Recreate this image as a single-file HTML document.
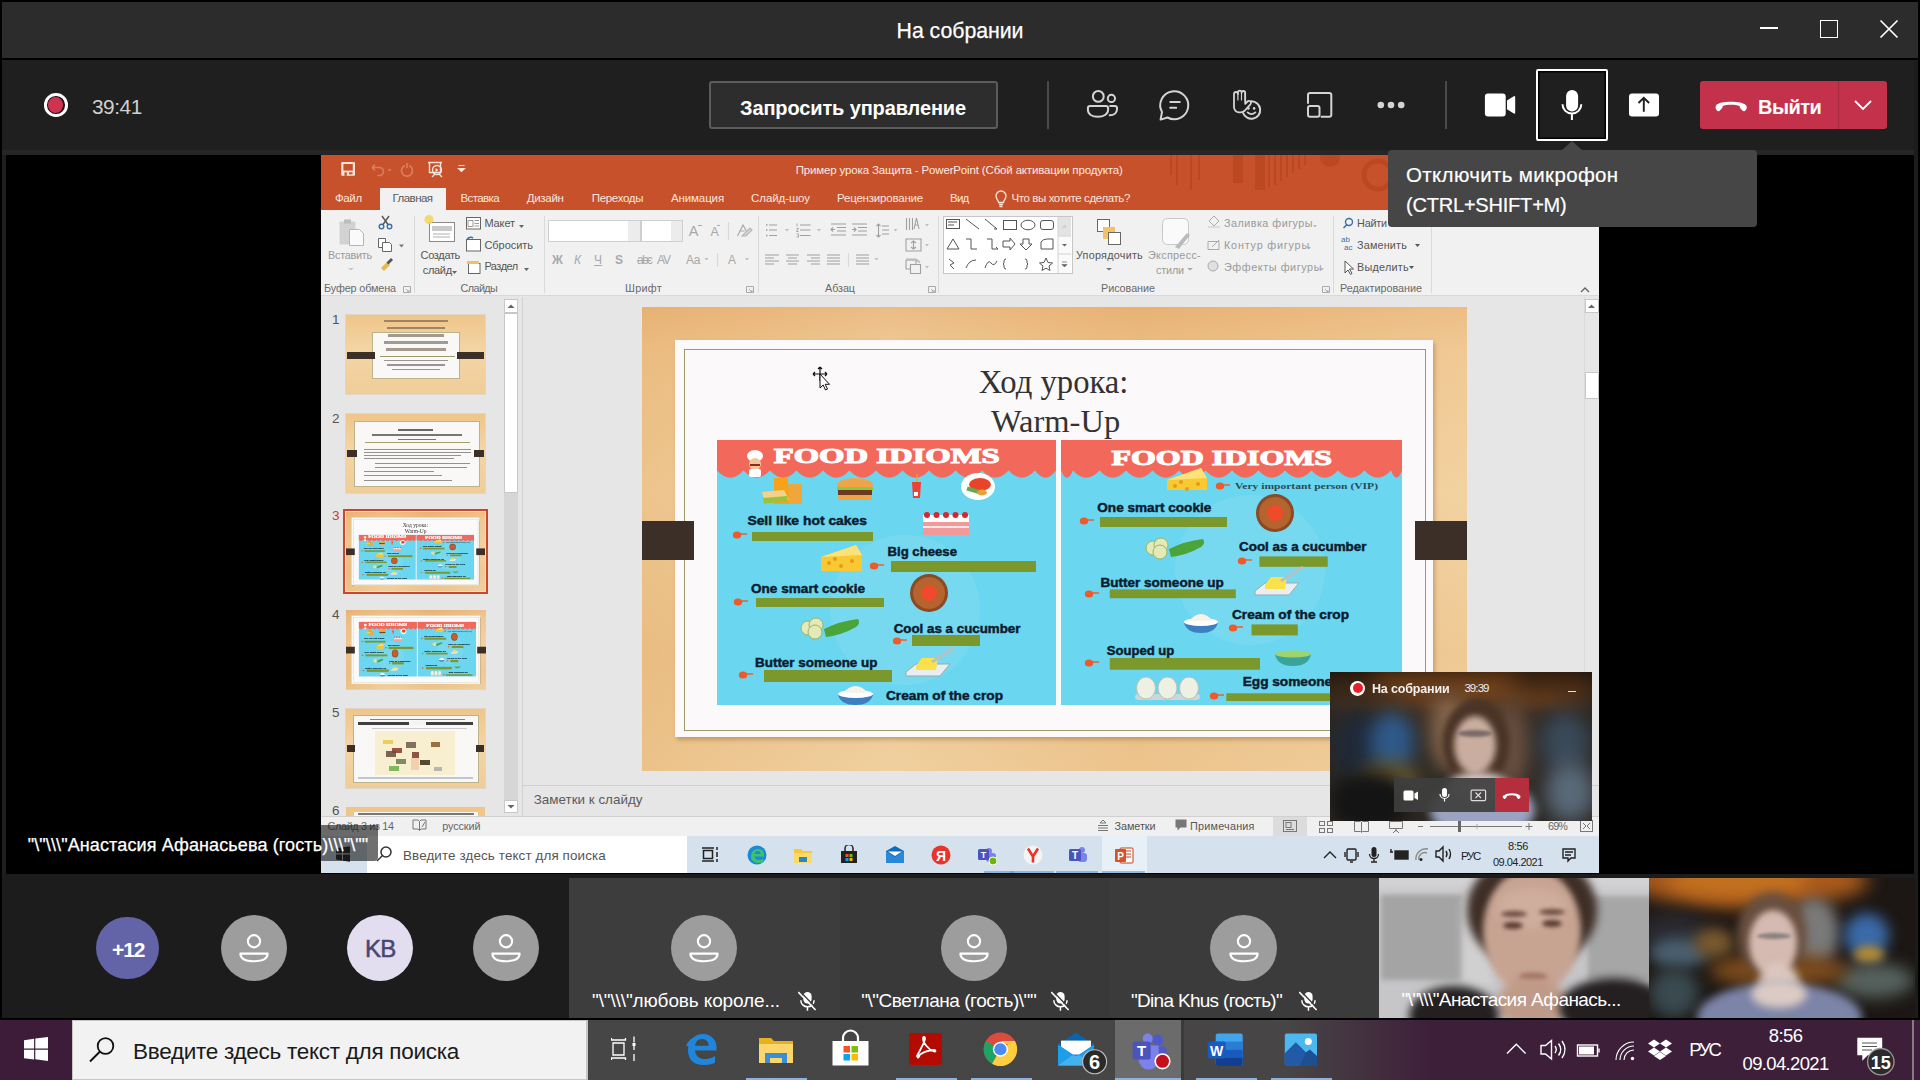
<!DOCTYPE html>
<html><head><meta charset="utf-8">
<style>
*{margin:0;padding:0;box-sizing:border-box}
html,body{width:1920px;height:1080px;overflow:hidden;background:#000;font-family:"Liberation Sans",sans-serif}
.a{position:absolute}
.t{position:absolute;white-space:nowrap;line-height:1}
</style></head><body>
<!-- Teams title bar -->
<div class="a" style="left:2px;top:2px;width:1916px;height:56px;background:#2c2c2c"></div>
<div class="t" style="left:0;width:1920px;text-align:center;top:21px;font-size:21.3px;letter-spacing:-0.05px;color:#fff;-webkit-text-stroke:0.25px #fff">На собрании</div>
<!-- window controls -->
<div class="a" style="left:1760px;top:27.2px;width:18px;height:1.6px;background:#fff"></div>
<div class="a" style="left:1820px;top:20px;width:18px;height:18px;border:1.6px solid #fff"></div>
<svg class="a" style="left:1879px;top:19px" width="20" height="20" viewBox="0 0 20 20"><path d="M1.5 1.5L18.5 18.5M18.5 1.5L1.5 18.5" stroke="#fff" stroke-width="1.7"/></svg>
<!-- toolbar -->
<div class="a" style="left:2px;top:60px;width:1912px;height:95px;background:#1f1f1f"></div>
<div class="a" style="left:2px;top:150px;width:1912px;height:5px;background:#262626"></div>
<div class="a" style="left:1914px;top:60px;width:4px;height:1020px;background:#1c1c1c"></div>
<div class="a" style="left:2px;top:155px;width:4px;height:720px;background:#1f1f1f"></div>
<!-- record dot -->
<div class="a" style="left:43.85px;top:93.15px;width:23.7px;height:23.7px;border-radius:50%;border:3px solid #fff;background:#1a0c10"></div>
<div class="a" style="left:48.1px;top:97.4px;width:15.2px;height:15.2px;border-radius:50%;background:#cf3350"></div>
<div class="t" style="left:92px;top:96.5px;font-size:20.8px;letter-spacing:-0.45px;color:#d0d0d0">39:41</div>
<!-- request control -->
<div class="a" style="left:709px;top:81px;width:289px;height:48px;border:2px solid #5c5c5c;border-radius:3px;background:#2d2d2d"></div>
<div class="t" style="left:740px;top:98px;font-size:20px;letter-spacing:-0.13px;font-weight:bold;color:#fff">Запросить управление</div>
<div class="a" style="left:1047px;top:81px;width:2px;height:48px;background:#4a4a4a"></div>
<div class="a" style="left:1445px;top:81px;width:2px;height:48px;background:#4a4a4a"></div>
<!-- mic focus -->
<div class="a" style="left:1536px;top:69px;width:72px;height:72px;border:2px solid #fff;border-radius:2px;background:#1f1f1f;box-shadow:inset 0 0 0 1.5px #000"></div>
<!-- leave button -->
<div class="a" style="left:1700px;top:81px;width:187px;height:48px;border-radius:3px;background:#c4314b"></div>
<div class="a" style="left:1838px;top:81px;width:1px;height:48px;background:#a82a40"></div>
<div class="t" style="left:1758px;top:97px;font-size:20px;letter-spacing:-0.5px;font-weight:bold;color:#fff">Выйти</div>

<svg class="a" style="left:0;top:0" width="1920" height="160" viewBox="0 0 1920 160">
<g fill="none" stroke="#d4d4d4" stroke-width="2" stroke-linecap="round">
<circle cx="1098.3" cy="96.4" r="5.4"/>
<circle cx="1111.4" cy="98.4" r="3.6"/>
<path d="M1091 106h14.8a2.3 2.3 0 0 1 2.3 2.3v1.5c0 4.5-4.6 7-10.2 7s-10-2.5-10-7v-1.5a2.3 2.3 0 0 1 2.3-2.3z" stroke-linecap="butt"/>
<path d="M1110.2 106h4.5a2.3 2.3 0 0 1 2.3 2.3v1c0 3.7-3.3 6-7.3 6"/>
<path d="M1162 112A14 14 0 1 1 1167.5 117.5L1160.6 119.6z" stroke-linejoin="round"/>
<path d="M1170.3 102h9.5M1170.2 107.8h6"/>
<path d="M1234 104.5v-10.5a2 2 0 0 1 4 0v-1.5a1.8 1.8 0 0 1 3.6 0v0.3a1.8 1.8 0 0 1 3.6 0v11l2.3-2.3a2 2 0 0 1 2.9 2.8l-5.5 6.2c-1.3 1.3-2.6 1.8-4.5 1.8h-1.4c-2.7 0-5-2.3-5-5z" stroke-width="1.8" stroke-linejoin="round"/>
<path d="M1237.9 94v6M1241.5 92.5v7.5M1245.1 92.7v7.3" stroke-width="1.2"/>
<path d="M1251.4 101.2A8.8 8.8 0 1 1 1243.1 113" stroke-width="2"/>
<path d="M1247.6 112.4q3.9 3.4 7.8 0" stroke-width="1.8"/>
<path d="M1308 103v-8a2 2 0 0 1 2-2h19.3a2 2 0 0 1 2 2v19.8a2 2 0 0 1-2 2h-7.8"/>
<rect x="1308" y="106" width="11.5" height="10.8" rx="2"/>
</g>
<g fill="#d4d4d4"><circle cx="1248.4" cy="108.4" r="1.3"/><circle cx="1254.1" cy="108.4" r="1.3"/>
<circle cx="1380.8" cy="105" r="3.3"/><circle cx="1391" cy="105" r="3.3"/><circle cx="1401.2" cy="105" r="3.3"/></g>
<g fill="#fff">
<rect x="1484.9" y="93.5" width="20.8" height="23" rx="3"/>
<path d="M1507 100.5l6.8-4.3a1 1 0 0 1 1.4 0.8v15.8a1 1 0 0 1-1.4 0.8l-6.8-4.3z"/>
<rect x="1566.1" y="89.9" width="12" height="21.5" rx="6"/>
<rect x="1629" y="93.5" width="30" height="23" rx="3"/>
</g>
<path d="M1562.5 104.2a9.4 9.4 0 0 0 18.8 0M1571.9 114v6" fill="none" stroke="#fff" stroke-width="2"/>
<path d="M1643.8 111.8v-13.5M1638.5 103l5.3-5.2 5.3 5.2" fill="none" stroke="#1f1f1f" stroke-width="1.9"/>
<path d="M1716 105.2c4.5-4.5 25.5-4.5 30 0c1 1 1 3.5 0 4.5l-1.2 1.2c-.6.6-1.6.5-2.2-.1l-2.5-2.8c-.5-.5-.6-1.4-.3-2c-4.8-1.8-12.5-1.8-17.3 0c.3.6.2 1.5-.3 2l-2.5 2.8c-.6.6-1.6.7-2.2.1l-1.2-1.2c-1-1-1-3.5 0-4.5z" fill="#fff"/>
<path d="M1855 101l8 8 8-8" fill="none" stroke="#fff" stroke-width="1.8"/>
<path d="M1562 150l10-9 10 9z" fill="#474747"/>
</svg>
<div class="a" style="left:321px;top:155px;width:1278px;height:55px;background:#c6512b;"></div>
<svg class="a" style="left:1160px;top:155px" width="230" height="55" viewBox="0 0 230 55"><g fill="#b9461f" opacity="0.75"><rect x="10" y="0" width="2" height="20"/><rect x="16" y="0" width="2" height="30"/><rect x="30" y="0" width="2" height="35"/><rect x="38" y="0" width="2" height="25"/><rect x="73" y="0" width="10" height="28"/><rect x="95" y="0" width="10" height="35"/><rect x="108" y="0" width="2" height="32"/><rect x="114" y="0" width="2" height="30"/><rect x="120" y="0" width="2" height="26"/><rect x="126" y="0" width="2" height="22"/><rect x="132" y="0" width="2" height="18"/><rect x="138" y="0" width="2" height="14"/><rect x="144" y="0" width="2" height="10"/><circle cx="170" cy="2" r="10"/><circle cx="218" cy="20" r="14" fill="none" stroke="#b9461f" stroke-width="5"/></g></svg>
<svg class="a" style="left:321px;top:155px" width="160" height="30" viewBox="0 0 160 30">
<rect x="20.2" y="7" width="13.8" height="13.8" rx="1" fill="#f7e3da"/><rect x="22.4" y="9" width="9.4" height="6.6" fill="#c6512b"/><rect x="23.5" y="17.3" width="2.3" height="3.5" fill="#c6512b"/><rect x="28" y="17.3" width="3.5" height="2" fill="#c6512b"/>
<g fill="none" stroke="#e08a6a" stroke-width="1.6" opacity="0.8">
<path d="M51 12.5h7.5a4 4 0 0 1 0 8h-2M51 12.5l3-3M51 12.5l3 3"/>
<path d="M67 15h3"/>
<path d="M84 10.5a5.5 5.5 0 1 0 4 0M86 8v5"/>
</g>
<g fill="none" stroke="#f7e3da" stroke-width="1.4">
<path d="M107 7.5h14M108.5 7.5v10h11v-10"/><circle cx="116" cy="15" r="4.5"/><path d="M111 22l3-3M121 22l-3-3"/>
</g>
<path d="M114.5 13l3 2-3 2z" fill="#f7e3da"/>
<path d="M137.5 10.5h6M137.5 13.5l3 3 3-3z" stroke="#f7e3da" stroke-width="1.2" fill="#f7e3da"/>
</svg>
<div class="t" style="left:795.70px;top:165.27px;font-size:11.5px;color:#fbeae3;letter-spacing:-0.155px;">Пример урока Защита - PowerPoint (Сбой активации продукта)</div>
<div class="a" style="left:380px;top:188px;width:66px;height:22px;background:#f1f1f1;"></div>
<div class="t" style="left:335.00px;top:193.37px;font-size:11.5px;color:#fbe6dc;letter-spacing:-0.393px;">Файл</div>
<div class="t" style="left:392.50px;top:193.37px;font-size:11.5px;color:#5a5a5a;letter-spacing:-0.539px;">Главная</div>
<div class="t" style="left:460.50px;top:193.37px;font-size:11.5px;color:#fbe6dc;letter-spacing:-0.606px;">Вставка</div>
<div class="t" style="left:526.70px;top:193.37px;font-size:11.5px;color:#fbe6dc;letter-spacing:-0.276px;">Дизайн</div>
<div class="t" style="left:591.70px;top:193.37px;font-size:11.5px;color:#fbe6dc;letter-spacing:-0.305px;">Переходы</div>
<div class="t" style="left:671.00px;top:193.37px;font-size:11.5px;color:#fbe6dc;letter-spacing:-0.123px;">Анимация</div>
<div class="t" style="left:751.00px;top:193.37px;font-size:11.5px;color:#fbe6dc;letter-spacing:-0.069px;">Слайд-шоу</div>
<div class="t" style="left:837.00px;top:193.37px;font-size:11.5px;color:#fbe6dc;letter-spacing:-0.200px;">Рецензирование</div>
<div class="t" style="left:950.00px;top:193.37px;font-size:11.5px;color:#fbe6dc;letter-spacing:-0.768px;">Вид</div>
<div class="t" style="left:1011.40px;top:193.37px;font-size:11.5px;color:#fbe6dc;letter-spacing:-0.388px;">Что вы хотите сделать?</div>
<svg class="a" style="left:994px;top:190px" width="14" height="18" viewBox="0 0 14 18"><path d="M4.5 12.5c0-2-2.5-3.5-2.5-6.5a5 5 0 0 1 10 0c0 3-2.5 4.5-2.5 6.5zM5 14.5h4M5.5 16.5h3" fill="none" stroke="#fbe6dc" stroke-width="1.3"/></svg>
<div class="a" style="left:321px;top:210px;width:1278px;height:86px;background:#f1f1f1;"></div>
<div class="a" style="left:321px;top:295px;width:1278px;height:1px;background:#d9d9d9;"></div>
<div class="a" style="left:414px;top:216px;width:1px;height:77px;background:#dadada;"></div>
<div class="a" style="left:544px;top:216px;width:1px;height:77px;background:#dadada;"></div>
<div class="a" style="left:757.5px;top:216px;width:1px;height:77px;background:#dadada;"></div>
<div class="a" style="left:937.5px;top:216px;width:1px;height:77px;background:#dadada;"></div>
<div class="a" style="left:1333px;top:216px;width:1px;height:77px;background:#dadada;"></div>
<div class="a" style="left:1431px;top:216px;width:1px;height:77px;background:#dadada;"></div>
<div class="t" style="left:324.00px;top:283.16px;font-size:10.8px;color:#6a6a6a;letter-spacing:-0.116px;">Буфер обмена</div>
<div class="t" style="left:460.60px;top:283.16px;font-size:10.8px;color:#6a6a6a;letter-spacing:-0.601px;">Слайды</div>
<div class="t" style="left:625.00px;top:283.16px;font-size:10.8px;color:#6a6a6a;letter-spacing:0.293px;">Шрифт</div>
<div class="t" style="left:825.00px;top:283.16px;font-size:10.8px;color:#6a6a6a;letter-spacing:-0.059px;">Абзац</div>
<div class="t" style="left:1101.00px;top:283.16px;font-size:10.8px;color:#6a6a6a;letter-spacing:-0.044px;">Рисование</div>
<div class="t" style="left:1340.00px;top:283.16px;font-size:10.8px;color:#6a6a6a;letter-spacing:-0.020px;">Редактирование</div>
<svg class="a" style="left:403px;top:286px" width="8" height="7" viewBox="0 0 8 7"><path d="M0.5 0.5h7v6h-7zM3 3l3 3M6 4v2h-2" fill="none" stroke="#aaa" stroke-width="1"/></svg>
<svg class="a" style="left:746px;top:286px" width="8" height="7" viewBox="0 0 8 7"><path d="M0.5 0.5h7v6h-7zM3 3l3 3M6 4v2h-2" fill="none" stroke="#aaa" stroke-width="1"/></svg>
<svg class="a" style="left:928px;top:286px" width="8" height="7" viewBox="0 0 8 7"><path d="M0.5 0.5h7v6h-7zM3 3l3 3M6 4v2h-2" fill="none" stroke="#aaa" stroke-width="1"/></svg>
<svg class="a" style="left:1322px;top:286px" width="8" height="7" viewBox="0 0 8 7"><path d="M0.5 0.5h7v6h-7zM3 3l3 3M6 4v2h-2" fill="none" stroke="#aaa" stroke-width="1"/></svg>
<svg class="a" style="left:321px;top:210px" width="1278" height="86" viewBox="321 210 1278 86">
<g>
<rect x="339" y="10" width="0" height="0"/>
<path d="M339.5 221.5h16v23h-16z" fill="#d2d2d2"/><path d="M344 219.5h7v4h-7z" fill="#bdbdbd"/>
<path d="M349.5 229.5h10l4 4v12h-14z" fill="#fafafa" stroke="#b5b5b5" stroke-width="1"/>
<path d="M348 268l3 2.5 3-2.5" fill="#c9c9c9"/>
<g fill="none" stroke="#3d6fa8" stroke-width="1.4"><circle cx="381.5" cy="226.5" r="2.3"/><circle cx="389.5" cy="226.5" r="2.3"/><path d="M383 224.5l6-8.5M388 224.5l-6-8.5" stroke="#555"/></g>
<g fill="#fff" stroke="#666" stroke-width="1"><path d="M378.5 238.5h7v9h-7z"/><path d="M382.5 242.5h7l2 2v7h-9z"/></g>
<path d="M399 244.5h5l-2.5 3z" fill="#777"/>
<path d="M381 268l6-6 3 3-6 6z" fill="#e9b84a"/><path d="M386.5 262.5l4.5-4.5 2 2-4.5 4.5z" fill="#555"/>
<!-- new slide -->
<rect x="429.5" y="222.5" width="25" height="19" fill="#fff" stroke="#8a8a8a" stroke-width="1"/>
<rect x="432" y="226" width="20" height="5" fill="#c9c9c9"/>
<path d="M433 234h17M433 237h17" stroke="#b0b0b0" stroke-width="1"/>
<circle cx="429" cy="219.5" r="4.5" fill="#f3d35a" opacity="0.85"/>
<!-- layout icons -->
<g fill="#fff" stroke="#666" stroke-width="1">
<rect x="466.5" y="217.5" width="14" height="11.5"/><rect x="466.5" y="239.5" width="14" height="11.5"/><rect x="468.5" y="263.5" width="11.5" height="10"/>
</g>
<path d="M468 220.5h5v6h-5zM474.5 220.5h4.5M474.5 223.5h4.5M474.5 226h4.5" stroke="#999" fill="none" stroke-width="1"/>
<path d="M467 240a4 4 0 0 1 6-2" stroke="#3d6fa8" fill="none" stroke-width="1.6"/>
<path d="M467 261h12v3h-12z" fill="#e9c26a"/>
<path d="M519 225h5l-2.5 3z M524 268h5l-2.5 3z M452 271h5l-2.5 3z" fill="#666"/>
<!-- font boxes -->
<rect x="548.5" y="220.5" width="92" height="21" fill="#fff" stroke="#cfcfcf"/>
<rect x="628" y="221" width="12" height="20" fill="#ececec"/>
<rect x="641.5" y="220.5" width="41" height="21" fill="#fff" stroke="#cfcfcf"/>
<rect x="671" y="221" width="11" height="20" fill="#ececec"/>
<!-- shapes gallery -->
<rect x="943.5" y="216.5" width="129" height="57" fill="#fff" stroke="#c6c6c6"/>
<rect x="1058" y="217" width="13" height="19" fill="#e3e3e3"/>
<rect x="1058" y="236" width="13" height="37" fill="#fafafa"/>
<path d="M1058 217v56M1058 236h13M1058 254h13" stroke="#d4d4d4" stroke-width="1"/>
<path d="M1062 244l2.5 2.5 2.5-2.5z" fill="#666"/><path d="M1062 262h5M1062 264.5l2.5 2.5 2.5-2.5z" fill="#666" stroke="#666" stroke-width="0.7"/>
<path d="M1062 227.5l2.5-2.5 2.5 2.5z" fill="#c8c8c8"/>
<g fill="none" stroke="#555" stroke-width="1">
<rect x="946.5" y="219.5" width="13" height="9"/><path d="M948 222h9M948 225h6"/>
<path d="M966 219l13 10M985 219l12 10M995 227l2 2-3 0"/>
<rect x="1003.5" y="220.5" width="13" height="9"/>
<ellipse cx="1028" cy="225" rx="7" ry="4.8"/>
<rect x="1040.5" y="220.5" width="13" height="9" rx="2.5"/>
<path d="M947 249l6-10 6 10z"/>
<path d="M966 239h5v10h6M987 239h5v10h6l-2-2"/>
<path d="M1003 241h7v-3l5 6-5 6v-3h-7z"/>
<path d="M1023 239h6v5h3l-6 6-6-6h3z"/>
<path d="M1041 249v-7q2-3 6-3h6v10z"/>
<path d="M949 259l5 4-4 2 4 4M966 268q3-8 10-8M985 268q3-9 6-5t6-2"/>
<path d="M1006 259q-2 0-2 2v2l-1 1 1 1v2q0 2 2 2M1025 259q2 0 2 2v2l1 1-1 1v2q0 2-2 2"/>
<path d="M1046 258l2 4.5 4.5 0.5-3.5 3 1 4.5-4-2.3-4 2.3 1-4.5-3.5-3 4.5-.5z"/>
</g>
<!-- arrange -->
<rect x="1097.5" y="219.5" width="12" height="12" fill="#fff" stroke="#666"/>
<rect x="1103" y="227" width="12" height="12" fill="#f2c26b"/>
<rect x="1108.5" y="232.5" width="12" height="12" fill="#fff" stroke="#666"/>
<path d="M1106 268l3 2.5 3-2.5z" fill="#777"/>
<!-- quick styles -->
<rect x="1162.5" y="218.5" width="26" height="26" rx="5" fill="#fafafa" stroke="#c8c8c8"/>
<path d="M1175 247l12-14 3 2-11 14z" fill="#bbb"/>
<path d="M1187 268l3 2.5 3-2.5z" fill="#aaa"/>
<!-- fill/outline/effects icons -->
<path d="M1209 221l5-5 5 5-5 5z" fill="none" stroke="#aaa"/><path d="M1208 226h12v2h-12z" fill="#ddd"/>
<path d="M1208 241.5h11v8h-11zM1212 247l7-7" fill="none" stroke="#aaa"/>
<circle cx="1213" cy="266" r="5" fill="#e0e0e0" stroke="#aaa"/>
<path d="M1313 225h4l-2 2.5zM1307 247h4l-2 2.5zM1320 268h4l-2 2.5z" fill="#bbb"/>
<!-- editing -->
<circle cx="1349" cy="222" r="3.5" fill="none" stroke="#3d6fa8" stroke-width="1.4"/><path d="M1347 224.5l-3.5 3.5" stroke="#3d6fa8" stroke-width="1.6"/>
<path d="M1415 244h5l-2.5 3zM1409 266h5l-2.5 3z" fill="#555"/>
<path d="M1345 261v12l3-3 2.5 4.5 1.5-1-2.5-4.5h4z" fill="#fff" stroke="#555"/>
<!-- collapse arrow -->
<path d="M1581 292l4-4 4 4" fill="none" stroke="#666" stroke-width="1.4"/>
</g>
<!-- paragraph icons -->
<g fill="none" stroke="#a0a0a0" stroke-width="1.1">
<path d="M769 225h8M769 230h8M769 235.5h8"/><path d="M766 225h1.5M766 230h1.5M766 235.5h1.5" stroke-width="1.6"/>
<path d="M800 225h10.5M800 230h10.5M800 235.5h10.5"/><path d="M797 223.5v3M796.5 228.5h2l-2 3h2M796.5 234h2v3h-2" stroke-width="0.9"/>
<path d="M831 224h15M837 227.5h9M837 231h9M831 235h15M835 229.5h-4M833 227.5l-2 2 2 2"/>
<path d="M852 224h15M858 227.5h9M858 231h9M852 235h15M852 229.5h4M854 227.5l2 2-2 2"/>
<path d="M878.5 224v13M876.5 226l2-2 2 2M876.5 235l2 2 2-2M882 226h7M882 230h7M882 234h7"/>
<path d="M906.5 218v12M909.5 218v12M912.5 218v12"/><path d="M914 229l2.5-11 2.5 11M915 225h3"/>
<path d="M906 239h15v12h-15zM913.5 241v8M911 243l2.5-2 2.5 2M911 247l2.5 2 2.5-2"/>
<path d="M910.5 264.5h10v9h-10zM906 260h10v4M906 260v9h4" /><path d="M906 259.5h10l4 3" stroke="#bbb" stroke-width="2"/>
<path d="M765 255h14M765 258h9M765 261h14M765 264h9"/>
<path d="M786 255h13M788 258h9M786 261h13M788 264h9"/>
<path d="M807 255h13M811 258h9M807 261h13M811 264h9"/>
<path d="M827 255h13M827 258h13M827 261h13M827 264h13"/>
<path d="M856 255h13M856 258h13M856 261h13M856 264h13"/>
<path d="M848.5 253v14M728.5 222v18M717.5 253v14" stroke="#d8d8d8"/>
</g>
<g fill="#c0c0c0"><path d="M785 229h4l-2 2.5zM817 229h4l-2 2.5zM893.5 229h4l-2 2.5zM925 224h4l-2 2.5zM925 244h4l-2 2.5zM925 266h4l-2 2.5zM874.5 258h4l-2 2.5zM704.5 258h4l-2 2.5zM745 258h4l-2 2.5z"/></g>
<g fill="none" stroke="#a8a8a8" stroke-width="1.2"><path d="M737.5 236l5.5-11 5 9M739.5 231h5"/><path d="M742 236l8-8 2 2-6 6z" fill="#d6d6d6" stroke="#b8b8b8"/></g>
</svg>
<div class="t" style="left:328.00px;top:250.26px;font-size:10.8px;color:#9a9a9a;letter-spacing:-0.223px;">Вставить</div>
<div class="t" style="left:420.60px;top:250.09px;font-size:11px;color:#555;letter-spacing:-0.344px;">Создать</div>
<div class="t" style="left:422.80px;top:265.09px;font-size:11px;color:#555;letter-spacing:-0.320px;">слайд</div>
<div class="t" style="left:484.40px;top:218.49px;font-size:11px;color:#555;letter-spacing:-0.107px;">Макет</div>
<div class="t" style="left:484.40px;top:240.09px;font-size:11px;color:#555;letter-spacing:-0.037px;">Сбросить</div>
<div class="t" style="left:484.40px;top:261.29px;font-size:11px;color:#555;letter-spacing:-0.493px;">Раздел</div>
<div class="t" style="left:552.00px;top:253.84px;font-size:12px;color:#a8a8a8;font-weight:bold;">Ж</div>
<div class="t" style="left:574.00px;top:253.84px;font-size:12px;color:#a8a8a8;font-style:italic;">К</div>
<div class="t" style="left:594.00px;top:253.84px;font-size:12px;color:#a8a8a8;text-decoration:underline;">Ч</div>
<div class="t" style="left:615.00px;top:253.84px;font-size:12px;color:#a8a8a8;font-weight:bold;">S</div>
<div class="t" style="left:637.00px;top:253.84px;font-size:12px;color:#a8a8a8;letter-spacing:-1.783px;text-decoration:line-through;">abc</div>
<div class="t" style="left:657.00px;top:253.84px;font-size:12px;color:#a8a8a8;letter-spacing:-1.059px;">AV</div>
<div class="t" style="left:686.00px;top:253.84px;font-size:12px;color:#a8a8a8;letter-spacing:-0.339px;">Aa</div>
<div class="t" style="left:728.00px;top:253.84px;font-size:12px;color:#a8a8a8;">A</div>
<div class="t" style="left:688.80px;top:224.13px;font-size:14.5px;color:#a8a8a8;">A</div>
<div class="t" style="left:710.50px;top:225.82px;font-size:12.5px;color:#a8a8a8;">A</div>
<div class="a" style="left:698px;top:225px;width:4px;height:1.4px;background:#aaa;"></div>
<div class="a" style="left:717px;top:225px;width:3px;height:1.4px;background:#aaa;"></div>
<div class="t" style="left:1076.00px;top:249.86px;font-size:10.8px;color:#555;letter-spacing:0.248px;">Упорядочить</div>
<div class="t" style="left:1148.00px;top:249.86px;font-size:10.8px;color:#9a9a9a;letter-spacing:0.304px;">Экспресс-</div>
<div class="t" style="left:1156.00px;top:264.86px;font-size:10.8px;color:#9a9a9a;letter-spacing:-0.143px;">стили</div>
<div class="t" style="left:1224.00px;top:218.36px;font-size:10.8px;color:#9a9a9a;letter-spacing:0.466px;">Заливка фигуры</div>
<div class="t" style="left:1224.00px;top:240.36px;font-size:10.8px;color:#9a9a9a;letter-spacing:0.806px;">Контур фигуры</div>
<div class="t" style="left:1224.00px;top:261.86px;font-size:10.8px;color:#9a9a9a;letter-spacing:0.571px;">Эффекты фигуры</div>
<div class="t" style="left:1357.00px;top:218.36px;font-size:10.8px;color:#555;letter-spacing:-0.164px;">Найти</div>
<div class="t" style="left:1357.00px;top:240.36px;font-size:10.8px;color:#555;letter-spacing:0.183px;">Заменить</div>
<div class="t" style="left:1357.00px;top:261.86px;font-size:10.8px;color:#555;letter-spacing:0.272px;">Выделить</div>
<div class="t" style="left:1341.00px;top:236.23px;font-size:8px;color:#3d6fa8;">ab</div>
<div class="t" style="left:1344.00px;top:244.23px;font-size:8px;color:#3d6fa8;">ac</div>
<div class="a" style="left:321px;top:296px;width:1278px;height:521px;background:#e6e6e6;"></div>
<div class="a" style="left:522px;top:297px;width:1px;height:520px;background:#d2d2d2;"></div>
<div class="a" style="left:504px;top:299px;width:14px;height:514px;background:#d6d6d6;"></div>
<div class="a" style="left:504px;top:299px;width:14px;height:14px;background:#fff;box-shadow:inset 0 0 0 1px #c8c8c8"></div>
<div class="a" style="left:504px;top:313px;width:14px;height:180px;background:#fff;box-shadow:inset 0 0 0 1px #c8c8c8"></div>
<div class="a" style="left:504px;top:800px;width:14px;height:13px;background:#fff;box-shadow:inset 0 0 0 1px #c8c8c8"></div>
<svg class="a" style="left:504px;top:299px" width="14" height="514" viewBox="0 0 14 514"><path d="M3.5 9l3.5-3.5 3.5 3.5z" fill="#666"/><path d="M3.5 506l3.5 3.5 3.5-3.5z" fill="#666"/></svg>
<div class="t" style="left:332.00px;top:313.17px;font-size:13.5px;color:#555;">1</div>
<div class="t" style="left:332.00px;top:411.87px;font-size:13.5px;color:#555;">2</div>
<div class="t" style="left:332.00px;top:508.97px;font-size:13.5px;color:#c8401e;">3</div>
<div class="t" style="left:332.00px;top:607.57px;font-size:13.5px;color:#555;">4</div>
<div class="t" style="left:332.00px;top:705.57px;font-size:13.5px;color:#555;">5</div>
<div class="t" style="left:332.00px;top:803.57px;font-size:13.5px;color:#555;">6</div>
<div class="a" style="left:346px;top:315px;width:139px;height:79px;background:linear-gradient(180deg,#efc589,#f3d5a5 45%,#f0cd98);box-shadow:0 0 0 1px #e0d6c8"></div>
<div class="a" style="left:373.4px;top:333px;width:85.8px;height:45.2px;background:#faf8f6;box-shadow:0 0 0 1px #b9b48a"></div>
<div class="a" style="left:347px;top:352px;width:27.5px;height:7px;background:#3b2f27;"></div>
<div class="a" style="left:456.5px;top:352px;width:27.5px;height:7px;background:#3b2f27;"></div>
<div class="a" style="left:384.0px;top:319.5px;width:64px;height:2.6px;background:#5a4a3a;opacity:.55"></div>
<div class="a" style="left:387.0px;top:326.5px;width:58px;height:2.6px;background:#5a4a3a;opacity:.55"></div>
<div class="a" style="left:388.0px;top:334px;width:56px;height:2.6px;background:#5a4a3a;opacity:.55"></div>
<div class="a" style="left:384.0px;top:341px;width:64px;height:2.6px;background:#5a4a3a;opacity:.55"></div>
<div class="a" style="left:386.0px;top:348px;width:60px;height:2.6px;background:#5a4a3a;opacity:.55"></div>
<div class="a" style="left:380px;top:356px;width:75px;height:1px;background:#9a9a6a;"></div>
<div class="a" style="left:384.0px;top:359.5px;width:64px;height:1.6px;background:#555;opacity:.6"></div>
<div class="a" style="left:387.0px;top:364px;width:58px;height:1.6px;background:#555;opacity:.6"></div>
<div class="a" style="left:392.0px;top:368.5px;width:48px;height:1.6px;background:#555;opacity:.6"></div>
<div class="a" style="left:346px;top:413.5px;width:139px;height:79px;background:linear-gradient(180deg,#efc589,#f3d5a5 45%,#f0cd98);box-shadow:0 0 0 1px #e0d6c8"></div>
<div class="a" style="left:354.5px;top:421.5px;width:124.5px;height:64.2px;background:#faf8f6;box-shadow:0 0 0 1px #b9b48a"></div>
<div class="a" style="left:347px;top:449.5px;width:10px;height:7.3px;background:#3b2f27;"></div>
<div class="a" style="left:474px;top:449.5px;width:10px;height:7.3px;background:#3b2f27;"></div>
<div class="a" style="left:398px;top:429px;width:35px;height:1.8px;background:#444;opacity:.8"></div>
<div class="a" style="left:372px;top:434.3px;width:90px;height:2px;background:#555;opacity:.8"></div>
<div class="a" style="left:398px;top:438.8px;width:38px;height:1.6px;background:#555;opacity:.8"></div>
<div class="a" style="left:365px;top:441.5px;width:105px;height:1px;background:#a3a070;"></div>
<div class="a" style="left:364px;top:449px;width:107px;height:1.3px;background:#666;opacity:.7"></div>
<div class="a" style="left:364px;top:452px;width:107px;height:1.3px;background:#666;opacity:.7"></div>
<div class="a" style="left:364px;top:455px;width:97px;height:1.3px;background:#666;opacity:.7"></div>
<div class="a" style="left:364px;top:458px;width:90px;height:1.3px;background:#666;opacity:.7"></div>
<div class="a" style="left:375px;top:462.5px;width:95px;height:1.3px;background:#666;opacity:.7"></div>
<div class="a" style="left:375px;top:466.5px;width:92px;height:1.3px;background:#666;opacity:.7"></div>
<div class="a" style="left:364px;top:471px;width:70px;height:1.3px;background:#666;opacity:.7"></div>
<div class="a" style="left:364px;top:475px;width:78px;height:1.3px;background:#666;opacity:.7"></div>
<div class="a" style="left:364px;top:479.5px;width:88px;height:1.3px;background:#666;opacity:.7"></div>
<div class="a" style="left:343.3px;top:508.7px;width:145px;height:85px;background:transparent;border:2px solid #d0442a;box-sizing:border-box"></div>
<div class="a" style="left:346px;top:512px;width:825px;height:464px;transform:scale(0.1684848484848485,0.17025862068965517);transform-origin:0 0;overflow:hidden;background:linear-gradient(180deg,#e8b378 0,#ecc189 9%,#efcd9a 40%,#eac28b 75%,#edca96 100%)"><div class="a" style="left:0;top:0;width:825px;height:464px;background:linear-gradient(90deg,rgba(230,170,100,.25),rgba(255,240,210,.15) 30%,rgba(230,170,100,.2) 60%,rgba(255,230,190,.2) 100%)"></div><div class="a" style="left:33px;top:33px;width:758px;height:397px;background:#fbf9f9;box-shadow:2px 3px 4px rgba(120,80,40,.35)"></div><div class="a" style="left:42px;top:42px;width:742px;height:382px;border:1px solid #9a9a6a"></div><div class="a" style="left:0;top:214px;width:52px;height:39px;background:#3b2f27"></div><div class="a" style="left:773px;top:214px;width:52px;height:39px;background:#3b2f27"></div><div class="t" style="left:336.7px;top:59.2px;font-family:&quot;Liberation Serif&quot;,serif;font-size:32.7px;color:#333">Ход урока:</div><div class="t" style="left:349px;top:98.3px;font-family:&quot;Liberation Serif&quot;,serif;font-size:32.5px;color:#333">Warm-Up</div><svg class="a" style="left:75px;top:133px" width="685" height="265" viewBox="717 440 685 265" preserveAspectRatio="none"><rect x="717" y="440" width="339" height="265" fill="#6bd6ef"/><rect x="1061" y="440" width="341" height="265" fill="#6bd6ef"/><circle cx="905" cy="610" r="75" fill="#8fe0f0" opacity="0.35"/><circle cx="1250" cy="570" r="75" fill="#8fe0f0" opacity="0.35"/><path d="M717 440H1056V470.5Q1045.5 484.75 1035.0 470.5Q1021.75 484.75 1008.5 470.5Q995.25 484.75 982.0 470.5Q968.75 484.75 955.5 470.5Q942.25 484.75 929.0 470.5Q915.75 484.75 902.5 470.5Q889.25 484.75 876.0 470.5Q862.75 484.75 849.5 470.5Q836.25 484.75 823.0 470.5Q809.75 484.75 796.5 470.5Q783.25 484.75 770.0 470.5Q756.75 484.75 743.5 470.5Q730.25 484.75 717 470.5Z" fill="#f2695c"/><path d="M1061 440H1402V470.5Q1396.5 484.75 1391.0 470.5Q1377.75 484.75 1364.5 470.5Q1351.25 484.75 1338.0 470.5Q1324.75 484.75 1311.5 470.5Q1298.25 484.75 1285.0 470.5Q1271.75 484.75 1258.5 470.5Q1245.25 484.75 1232.0 470.5Q1218.75 484.75 1205.5 470.5Q1192.25 484.75 1179.0 470.5Q1165.75 484.75 1152.5 470.5Q1139.25 484.75 1126.0 470.5Q1112.75 484.75 1099.5 470.5Q1086.25 484.75 1073 470.5Q1067.0 484.75 1061 470.5Z" fill="#f2695c"/><text x="773.7" y="462.5" font-family="Liberation Serif" font-weight="bold" font-size="21.5" fill="#fff" stroke="#fff" stroke-width="1.1" textLength="226" lengthAdjust="spacingAndGlyphs">FOOD IDIOMS</text><text x="1111.6" y="464.7" font-family="Liberation Serif" font-weight="bold" font-size="21.5" fill="#fff" stroke="#fff" stroke-width="1.1" textLength="220.5" lengthAdjust="spacingAndGlyphs">FOOD IDIOMS</text><ellipse cx="755.0" cy="456" rx="8" ry="6" fill="#fff"/><circle cx="755.0" cy="464" r="6" fill="#f3c39a"/><path d="M750.0 465h10" stroke="#8b2d1a" stroke-width="2"/><rect x="749.0" y="469" width="12" height="8" rx="2" fill="#fff"/><path d="M774 478h14l2 26h-16z" fill="#f7a21b"/><path d="M762 492l22 -2 5 10-24 4z" fill="#f4d28a"/><path d="M763 498l24 -2 1 5-24 3z" fill="#9ac23c"/><rect x="789" y="484" width="13" height="20" fill="#f0a63a"/><ellipse cx="855.0" cy="485" rx="18.0" ry="7" fill="#f0a44a"/><rect x="837" y="487" width="36" height="4" fill="#8dc63f"/><rect x="838" y="490" width="34" height="5" fill="#6b3a1f"/><rect x="838" y="495" width="34" height="5" rx="2" fill="#f0a44a"/><path d="M912 482h9l-1 16h-7z" fill="#ef4036"/><path d="M917 474v8" stroke="#f7a21b" stroke-width="1.2"/><rect x="914" y="492" width="4" height="4" fill="#fff"/><ellipse cx="978.0" cy="486.5" rx="17.0" ry="13.5" fill="#fff"/><ellipse cx="980.0" cy="484.5" rx="11.0" ry="6.5" fill="#e8442a"/><path d="M967 488.5l14 4" stroke="#6aa84f" stroke-width="4"/><ellipse cx="982.0" cy="492.5" rx="5" ry="3" fill="#e5a23b"/><rect x="923" y="519" width="46" height="16" fill="#f29a9a"/><rect x="923" y="515" width="46" height="7" fill="#fff"/><path d="M923 527h46" stroke="#fff" stroke-width="1.5"/><circle cx="927.0" cy="515" r="3" fill="#d9262c"/><circle cx="936.5" cy="515" r="3" fill="#d9262c"/><circle cx="946.0" cy="515" r="3" fill="#d9262c"/><circle cx="955.5" cy="515" r="3" fill="#d9262c"/><circle cx="965.0" cy="515" r="3" fill="#d9262c"/><path d="M821 557L856 545L862 555V571H821z" fill="#f9c933"/><path d="M821 557L856 545L862 555z" fill="#fde27a"/><circle cx="829" cy="563" r="2" fill="#e59a1f"/><circle cx="841" cy="566" r="2" fill="#e59a1f"/><circle cx="852" cy="561" r="2" fill="#e59a1f"/><circle cx="835" cy="559" r="2" fill="#e59a1f"/><circle cx="929.0" cy="593.0" r="19.0" fill="#8a4a24"/><circle cx="929.0" cy="593.0" r="16.0" fill="#b5632f"/><circle cx="929.0" cy="593.0" r="8.0" fill="#ef4a2a"/><circle cx="808" cy="628" r="7" fill="#e4eab7" stroke="#9bb26a"/><circle cx="816" cy="625" r="7" fill="#e4eab7" stroke="#9bb26a"/><circle cx="815" cy="632" r="7" fill="#e4eab7" stroke="#9bb26a"/><path d="M824 629q16-8 34-10q3 4-2 8q-14 8-30 10z" fill="#4aa43a"/><path d="M906 672l10-8h34l-10 12h-34z" fill="#e8eef2" stroke="#9aa"/><path d="M916 666l6-8h16l-2 12h-20z" fill="#fbe14a"/><path d="M932 662l22-14" stroke="#b9c0c4" stroke-width="3"/><path d="M838 695h35q-3 10-17.5 10q-14.5 0-17.5 -10z" fill="#3d7fc1"/><ellipse cx="855.5" cy="694" rx="17.5" ry="4" fill="#fff"/><path d="M843 693q12.5-14 25 0z" fill="#f7f3e6"/><text x="747.4" y="525.2" font-family="Liberation Sans" font-weight="bold" font-size="12.2" fill="#0c1d30" stroke="#0c1d30" stroke-width="0.45" textLength="119.6" lengthAdjust="spacingAndGlyphs">Sell like hot cakes</text><ellipse cx="737" cy="535" rx="4.2" ry="3.6" fill="#f05a28"/><path d="M740 534h7" stroke="#f05a28" stroke-width="1.4"/><rect x="752" y="532" width="121" height="9" fill="#7a982b"/><text x="887.5" y="556.3" font-family="Liberation Sans" font-weight="bold" font-size="12.2" fill="#0c1d30" stroke="#0c1d30" stroke-width="0.45" textLength="69.5" lengthAdjust="spacingAndGlyphs">Big cheese</text><ellipse cx="874" cy="566" rx="4.2" ry="3.6" fill="#f05a28"/><path d="M877 565h7" stroke="#f05a28" stroke-width="1.4"/><rect x="891" y="561" width="145" height="11" fill="#7a982b"/><text x="751" y="592.5" font-family="Liberation Sans" font-weight="bold" font-size="12.2" fill="#0c1d30" stroke="#0c1d30" stroke-width="0.45" textLength="114" lengthAdjust="spacingAndGlyphs">One smart cookie</text><ellipse cx="738" cy="602" rx="4.2" ry="3.6" fill="#f05a28"/><path d="M741 601h7" stroke="#f05a28" stroke-width="1.4"/><rect x="756" y="598" width="128" height="9" fill="#7a982b"/><text x="893.7" y="632.5" font-family="Liberation Sans" font-weight="bold" font-size="12.2" fill="#0c1d30" stroke="#0c1d30" stroke-width="0.45" textLength="126.8" lengthAdjust="spacingAndGlyphs">Cool as a cucumber</text><ellipse cx="897" cy="641" rx="4.2" ry="3.6" fill="#f05a28"/><path d="M900 640h7" stroke="#f05a28" stroke-width="1.4"/><rect x="912" y="635" width="68" height="11" fill="#7a982b"/><text x="755" y="667" font-family="Liberation Sans" font-weight="bold" font-size="12.2" fill="#0c1d30" stroke="#0c1d30" stroke-width="0.45" textLength="122.5" lengthAdjust="spacingAndGlyphs">Butter someone up</text><ellipse cx="743" cy="675" rx="4.2" ry="3.6" fill="#f05a28"/><path d="M746 674h7" stroke="#f05a28" stroke-width="1.4"/><rect x="764" y="670" width="128" height="12" fill="#7a982b"/><text x="886" y="700" font-family="Liberation Sans" font-weight="bold" font-size="12.2" fill="#0c1d30" stroke="#0c1d30" stroke-width="0.45" textLength="117" lengthAdjust="spacingAndGlyphs">Cream of the crop</text><path d="M1167 480L1201 468L1207 478V490H1167z" fill="#f9c933"/><path d="M1167 480L1201 468L1207 478z" fill="#fde27a"/><circle cx="1175" cy="486" r="2" fill="#e59a1f"/><circle cx="1187" cy="489" r="2" fill="#e59a1f"/><circle cx="1198" cy="484" r="2" fill="#e59a1f"/><circle cx="1181" cy="482" r="2" fill="#e59a1f"/><ellipse cx="1220" cy="486" rx="4.2" ry="3.6" fill="#f05a28"/><path d="M1223 485h7" stroke="#f05a28" stroke-width="1.4"/><text x="1235" y="489" font-family="Liberation Serif" font-weight="bold" font-size="9" fill="#2a4a5a" textLength="143" lengthAdjust="spacingAndGlyphs">Very important person (VIP)</text><text x="1097.3" y="512" font-family="Liberation Sans" font-weight="bold" font-size="12.2" fill="#0c1d30" stroke="#0c1d30" stroke-width="0.45" textLength="114" lengthAdjust="spacingAndGlyphs">One smart cookie</text><ellipse cx="1084" cy="521" rx="4.2" ry="3.6" fill="#f05a28"/><path d="M1087 520h7" stroke="#f05a28" stroke-width="1.4"/><rect x="1100" y="517" width="127" height="10" fill="#7a982b"/><circle cx="1275.0" cy="513.0" r="19.0" fill="#8a4a24"/><circle cx="1275.0" cy="513.0" r="16.0" fill="#b5632f"/><circle cx="1275.0" cy="513.0" r="8.0" fill="#ef4a2a"/><circle cx="1153" cy="548" r="7" fill="#e4eab7" stroke="#9bb26a"/><circle cx="1161" cy="545" r="7" fill="#e4eab7" stroke="#9bb26a"/><circle cx="1160" cy="552" r="7" fill="#e4eab7" stroke="#9bb26a"/><path d="M1169 549q16-8 34-10q3 4-2 8q-14 8-30 10z" fill="#4aa43a"/><text x="1239" y="551" font-family="Liberation Sans" font-weight="bold" font-size="12.2" fill="#0c1d30" stroke="#0c1d30" stroke-width="0.45" textLength="127.5" lengthAdjust="spacingAndGlyphs">Cool as a cucumber</text><ellipse cx="1242" cy="561" rx="4.2" ry="3.6" fill="#f05a28"/><path d="M1245 560h7" stroke="#f05a28" stroke-width="1.4"/><rect x="1259.4" y="556.4" width="68.29999999999995" height="10.399999999999977" fill="#7a982b"/><text x="1100.4" y="586.6" font-family="Liberation Sans" font-weight="bold" font-size="12.2" fill="#0c1d30" stroke="#0c1d30" stroke-width="0.45" textLength="123.4" lengthAdjust="spacingAndGlyphs">Butter someone up</text><ellipse cx="1089" cy="594" rx="4.2" ry="3.6" fill="#f05a28"/><path d="M1092 593h7" stroke="#f05a28" stroke-width="1.4"/><rect x="1109.8" y="589.4" width="126.0" height="8.800000000000068" fill="#7a982b"/><path d="M1255 591l10-8h34l-10 12h-34z" fill="#e8eef2" stroke="#9aa"/><path d="M1265 585l6-8h16l-2 12h-20z" fill="#fbe14a"/><path d="M1281 581l22-14" stroke="#b9c0c4" stroke-width="3"/><path d="M1184 623h34q-3 10-17.0 10q-14.0 0-17.0 -10z" fill="#3d7fc1"/><ellipse cx="1201.0" cy="622" rx="17.0" ry="4" fill="#fff"/><path d="M1189 621q12.0-14 24 0z" fill="#f7f3e6"/><text x="1232" y="619.3" font-family="Liberation Sans" font-weight="bold" font-size="12.2" fill="#0c1d30" stroke="#0c1d30" stroke-width="0.45" textLength="117" lengthAdjust="spacingAndGlyphs">Cream of the crop</text><ellipse cx="1233" cy="628" rx="4.2" ry="3.6" fill="#f05a28"/><path d="M1236 627h7" stroke="#f05a28" stroke-width="1.4"/><rect x="1251.5" y="624.4" width="46.299999999999955" height="11.0" fill="#7a982b"/><text x="1106.7" y="654.9" font-family="Liberation Sans" font-weight="bold" font-size="12.2" fill="#0c1d30" stroke="#0c1d30" stroke-width="0.45" textLength="67.7" lengthAdjust="spacingAndGlyphs">Souped up</text><ellipse cx="1089" cy="663" rx="4.2" ry="3.6" fill="#f05a28"/><path d="M1092 662h7" stroke="#f05a28" stroke-width="1.4"/><rect x="1109.8" y="658" width="150.20000000000005" height="11.700000000000045" fill="#7a982b"/><path d="M1275 654h36q-2 12-18.0 12q-16.0 0-18.0 -12z" fill="#3aa39a"/><ellipse cx="1293.0" cy="654" rx="18.0" ry="3.5" fill="#9fd36b"/><rect x="1135" y="694" width="65" height="6" rx="3" fill="#c9d6dc"/><ellipse cx="1146.0" cy="688" rx="9.5" ry="11" fill="#eef0e4" stroke="#b9c2b0"/><ellipse cx="1167.5" cy="688" rx="9.5" ry="11" fill="#eef0e4" stroke="#b9c2b0"/><ellipse cx="1189.0" cy="688" rx="9.5" ry="11" fill="#eef0e4" stroke="#b9c2b0"/><text x="1242.7" y="686.4" font-family="Liberation Sans" font-weight="bold" font-size="12.2" fill="#0c1d30" stroke="#0c1d30" stroke-width="0.45" textLength="110" lengthAdjust="spacingAndGlyphs">Egg someone on</text><ellipse cx="1214" cy="696" rx="4.2" ry="3.6" fill="#f05a28"/><path d="M1217 695h7" stroke="#f05a28" stroke-width="1.4"/><rect x="1226.3" y="693.3" width="153.70000000000005" height="7.7000000000000455" fill="#7a982b"/></svg></div>
<div class="a" style="left:346.2px;top:609.9px;width:825px;height:464px;transform:scale(0.1696969696969697,0.17176724137931035);transform-origin:0 0;overflow:hidden;background:linear-gradient(180deg,#e8b378 0,#ecc189 9%,#efcd9a 40%,#eac28b 75%,#edca96 100%)"><div class="a" style="left:0;top:0;width:825px;height:464px;background:linear-gradient(90deg,rgba(230,170,100,.25),rgba(255,240,210,.15) 30%,rgba(230,170,100,.2) 60%,rgba(255,230,190,.2) 100%)"></div><div class="a" style="left:33px;top:33px;width:758px;height:397px;background:#fbf9f9;box-shadow:2px 3px 4px rgba(120,80,40,.35)"></div><div class="a" style="left:42px;top:42px;width:742px;height:382px;border:1px solid #9a9a6a"></div><div class="a" style="left:0;top:214px;width:52px;height:39px;background:#3b2f27"></div><div class="a" style="left:773px;top:214px;width:52px;height:39px;background:#3b2f27"></div><svg class="a" style="left:75px;top:68px" width="692" height="320" viewBox="717 440 685 265" preserveAspectRatio="none"><rect x="717" y="440" width="339" height="265" fill="#6bd6ef"/><rect x="1061" y="440" width="341" height="265" fill="#6bd6ef"/><circle cx="905" cy="610" r="75" fill="#8fe0f0" opacity="0.35"/><circle cx="1250" cy="570" r="75" fill="#8fe0f0" opacity="0.35"/><path d="M717 440H1056V470.5Q1045.5 484.75 1035.0 470.5Q1021.75 484.75 1008.5 470.5Q995.25 484.75 982.0 470.5Q968.75 484.75 955.5 470.5Q942.25 484.75 929.0 470.5Q915.75 484.75 902.5 470.5Q889.25 484.75 876.0 470.5Q862.75 484.75 849.5 470.5Q836.25 484.75 823.0 470.5Q809.75 484.75 796.5 470.5Q783.25 484.75 770.0 470.5Q756.75 484.75 743.5 470.5Q730.25 484.75 717 470.5Z" fill="#f2695c"/><path d="M1061 440H1402V470.5Q1396.5 484.75 1391.0 470.5Q1377.75 484.75 1364.5 470.5Q1351.25 484.75 1338.0 470.5Q1324.75 484.75 1311.5 470.5Q1298.25 484.75 1285.0 470.5Q1271.75 484.75 1258.5 470.5Q1245.25 484.75 1232.0 470.5Q1218.75 484.75 1205.5 470.5Q1192.25 484.75 1179.0 470.5Q1165.75 484.75 1152.5 470.5Q1139.25 484.75 1126.0 470.5Q1112.75 484.75 1099.5 470.5Q1086.25 484.75 1073 470.5Q1067.0 484.75 1061 470.5Z" fill="#f2695c"/><text x="773.7" y="462.5" font-family="Liberation Serif" font-weight="bold" font-size="21.5" fill="#fff" stroke="#fff" stroke-width="1.1" textLength="226" lengthAdjust="spacingAndGlyphs">FOOD IDIOMS</text><text x="1111.6" y="464.7" font-family="Liberation Serif" font-weight="bold" font-size="21.5" fill="#fff" stroke="#fff" stroke-width="1.1" textLength="220.5" lengthAdjust="spacingAndGlyphs">FOOD IDIOMS</text><ellipse cx="755.0" cy="456" rx="8" ry="6" fill="#fff"/><circle cx="755.0" cy="464" r="6" fill="#f3c39a"/><path d="M750.0 465h10" stroke="#8b2d1a" stroke-width="2"/><rect x="749.0" y="469" width="12" height="8" rx="2" fill="#fff"/><path d="M774 478h14l2 26h-16z" fill="#f7a21b"/><path d="M762 492l22 -2 5 10-24 4z" fill="#f4d28a"/><path d="M763 498l24 -2 1 5-24 3z" fill="#9ac23c"/><rect x="789" y="484" width="13" height="20" fill="#f0a63a"/><ellipse cx="855.0" cy="485" rx="18.0" ry="7" fill="#f0a44a"/><rect x="837" y="487" width="36" height="4" fill="#8dc63f"/><rect x="838" y="490" width="34" height="5" fill="#6b3a1f"/><rect x="838" y="495" width="34" height="5" rx="2" fill="#f0a44a"/><path d="M912 482h9l-1 16h-7z" fill="#ef4036"/><path d="M917 474v8" stroke="#f7a21b" stroke-width="1.2"/><rect x="914" y="492" width="4" height="4" fill="#fff"/><ellipse cx="978.0" cy="486.5" rx="17.0" ry="13.5" fill="#fff"/><ellipse cx="980.0" cy="484.5" rx="11.0" ry="6.5" fill="#e8442a"/><path d="M967 488.5l14 4" stroke="#6aa84f" stroke-width="4"/><ellipse cx="982.0" cy="492.5" rx="5" ry="3" fill="#e5a23b"/><rect x="923" y="519" width="46" height="16" fill="#f29a9a"/><rect x="923" y="515" width="46" height="7" fill="#fff"/><path d="M923 527h46" stroke="#fff" stroke-width="1.5"/><circle cx="927.0" cy="515" r="3" fill="#d9262c"/><circle cx="936.5" cy="515" r="3" fill="#d9262c"/><circle cx="946.0" cy="515" r="3" fill="#d9262c"/><circle cx="955.5" cy="515" r="3" fill="#d9262c"/><circle cx="965.0" cy="515" r="3" fill="#d9262c"/><path d="M821 557L856 545L862 555V571H821z" fill="#f9c933"/><path d="M821 557L856 545L862 555z" fill="#fde27a"/><circle cx="829" cy="563" r="2" fill="#e59a1f"/><circle cx="841" cy="566" r="2" fill="#e59a1f"/><circle cx="852" cy="561" r="2" fill="#e59a1f"/><circle cx="835" cy="559" r="2" fill="#e59a1f"/><circle cx="929.0" cy="593.0" r="19.0" fill="#8a4a24"/><circle cx="929.0" cy="593.0" r="16.0" fill="#b5632f"/><circle cx="929.0" cy="593.0" r="8.0" fill="#ef4a2a"/><circle cx="808" cy="628" r="7" fill="#e4eab7" stroke="#9bb26a"/><circle cx="816" cy="625" r="7" fill="#e4eab7" stroke="#9bb26a"/><circle cx="815" cy="632" r="7" fill="#e4eab7" stroke="#9bb26a"/><path d="M824 629q16-8 34-10q3 4-2 8q-14 8-30 10z" fill="#4aa43a"/><path d="M906 672l10-8h34l-10 12h-34z" fill="#e8eef2" stroke="#9aa"/><path d="M916 666l6-8h16l-2 12h-20z" fill="#fbe14a"/><path d="M932 662l22-14" stroke="#b9c0c4" stroke-width="3"/><path d="M838 695h35q-3 10-17.5 10q-14.5 0-17.5 -10z" fill="#3d7fc1"/><ellipse cx="855.5" cy="694" rx="17.5" ry="4" fill="#fff"/><path d="M843 693q12.5-14 25 0z" fill="#f7f3e6"/><text x="747.4" y="525.2" font-family="Liberation Sans" font-weight="bold" font-size="12.2" fill="#0c1d30" stroke="#0c1d30" stroke-width="0.45" textLength="119.6" lengthAdjust="spacingAndGlyphs">Sell like hot cakes</text><ellipse cx="737" cy="535" rx="4.2" ry="3.6" fill="#f05a28"/><path d="M740 534h7" stroke="#f05a28" stroke-width="1.4"/><rect x="752" y="532" width="121" height="9" fill="#7a982b"/><text x="887.5" y="556.3" font-family="Liberation Sans" font-weight="bold" font-size="12.2" fill="#0c1d30" stroke="#0c1d30" stroke-width="0.45" textLength="69.5" lengthAdjust="spacingAndGlyphs">Big cheese</text><ellipse cx="874" cy="566" rx="4.2" ry="3.6" fill="#f05a28"/><path d="M877 565h7" stroke="#f05a28" stroke-width="1.4"/><rect x="891" y="561" width="145" height="11" fill="#7a982b"/><text x="751" y="592.5" font-family="Liberation Sans" font-weight="bold" font-size="12.2" fill="#0c1d30" stroke="#0c1d30" stroke-width="0.45" textLength="114" lengthAdjust="spacingAndGlyphs">One smart cookie</text><ellipse cx="738" cy="602" rx="4.2" ry="3.6" fill="#f05a28"/><path d="M741 601h7" stroke="#f05a28" stroke-width="1.4"/><rect x="756" y="598" width="128" height="9" fill="#7a982b"/><text x="893.7" y="632.5" font-family="Liberation Sans" font-weight="bold" font-size="12.2" fill="#0c1d30" stroke="#0c1d30" stroke-width="0.45" textLength="126.8" lengthAdjust="spacingAndGlyphs">Cool as a cucumber</text><ellipse cx="897" cy="641" rx="4.2" ry="3.6" fill="#f05a28"/><path d="M900 640h7" stroke="#f05a28" stroke-width="1.4"/><rect x="912" y="635" width="68" height="11" fill="#7a982b"/><text x="755" y="667" font-family="Liberation Sans" font-weight="bold" font-size="12.2" fill="#0c1d30" stroke="#0c1d30" stroke-width="0.45" textLength="122.5" lengthAdjust="spacingAndGlyphs">Butter someone up</text><ellipse cx="743" cy="675" rx="4.2" ry="3.6" fill="#f05a28"/><path d="M746 674h7" stroke="#f05a28" stroke-width="1.4"/><rect x="764" y="670" width="128" height="12" fill="#7a982b"/><text x="886" y="700" font-family="Liberation Sans" font-weight="bold" font-size="12.2" fill="#0c1d30" stroke="#0c1d30" stroke-width="0.45" textLength="117" lengthAdjust="spacingAndGlyphs">Cream of the crop</text><path d="M1167 480L1201 468L1207 478V490H1167z" fill="#f9c933"/><path d="M1167 480L1201 468L1207 478z" fill="#fde27a"/><circle cx="1175" cy="486" r="2" fill="#e59a1f"/><circle cx="1187" cy="489" r="2" fill="#e59a1f"/><circle cx="1198" cy="484" r="2" fill="#e59a1f"/><circle cx="1181" cy="482" r="2" fill="#e59a1f"/><ellipse cx="1220" cy="486" rx="4.2" ry="3.6" fill="#f05a28"/><path d="M1223 485h7" stroke="#f05a28" stroke-width="1.4"/><text x="1235" y="489" font-family="Liberation Serif" font-weight="bold" font-size="9" fill="#2a4a5a" textLength="143" lengthAdjust="spacingAndGlyphs">Very important person (VIP)</text><text x="1097.3" y="512" font-family="Liberation Sans" font-weight="bold" font-size="12.2" fill="#0c1d30" stroke="#0c1d30" stroke-width="0.45" textLength="114" lengthAdjust="spacingAndGlyphs">One smart cookie</text><ellipse cx="1084" cy="521" rx="4.2" ry="3.6" fill="#f05a28"/><path d="M1087 520h7" stroke="#f05a28" stroke-width="1.4"/><rect x="1100" y="517" width="127" height="10" fill="#7a982b"/><circle cx="1275.0" cy="513.0" r="19.0" fill="#8a4a24"/><circle cx="1275.0" cy="513.0" r="16.0" fill="#b5632f"/><circle cx="1275.0" cy="513.0" r="8.0" fill="#ef4a2a"/><circle cx="1153" cy="548" r="7" fill="#e4eab7" stroke="#9bb26a"/><circle cx="1161" cy="545" r="7" fill="#e4eab7" stroke="#9bb26a"/><circle cx="1160" cy="552" r="7" fill="#e4eab7" stroke="#9bb26a"/><path d="M1169 549q16-8 34-10q3 4-2 8q-14 8-30 10z" fill="#4aa43a"/><text x="1239" y="551" font-family="Liberation Sans" font-weight="bold" font-size="12.2" fill="#0c1d30" stroke="#0c1d30" stroke-width="0.45" textLength="127.5" lengthAdjust="spacingAndGlyphs">Cool as a cucumber</text><ellipse cx="1242" cy="561" rx="4.2" ry="3.6" fill="#f05a28"/><path d="M1245 560h7" stroke="#f05a28" stroke-width="1.4"/><rect x="1259.4" y="556.4" width="68.29999999999995" height="10.399999999999977" fill="#7a982b"/><text x="1100.4" y="586.6" font-family="Liberation Sans" font-weight="bold" font-size="12.2" fill="#0c1d30" stroke="#0c1d30" stroke-width="0.45" textLength="123.4" lengthAdjust="spacingAndGlyphs">Butter someone up</text><ellipse cx="1089" cy="594" rx="4.2" ry="3.6" fill="#f05a28"/><path d="M1092 593h7" stroke="#f05a28" stroke-width="1.4"/><rect x="1109.8" y="589.4" width="126.0" height="8.800000000000068" fill="#7a982b"/><path d="M1255 591l10-8h34l-10 12h-34z" fill="#e8eef2" stroke="#9aa"/><path d="M1265 585l6-8h16l-2 12h-20z" fill="#fbe14a"/><path d="M1281 581l22-14" stroke="#b9c0c4" stroke-width="3"/><path d="M1184 623h34q-3 10-17.0 10q-14.0 0-17.0 -10z" fill="#3d7fc1"/><ellipse cx="1201.0" cy="622" rx="17.0" ry="4" fill="#fff"/><path d="M1189 621q12.0-14 24 0z" fill="#f7f3e6"/><text x="1232" y="619.3" font-family="Liberation Sans" font-weight="bold" font-size="12.2" fill="#0c1d30" stroke="#0c1d30" stroke-width="0.45" textLength="117" lengthAdjust="spacingAndGlyphs">Cream of the crop</text><ellipse cx="1233" cy="628" rx="4.2" ry="3.6" fill="#f05a28"/><path d="M1236 627h7" stroke="#f05a28" stroke-width="1.4"/><rect x="1251.5" y="624.4" width="46.299999999999955" height="11.0" fill="#7a982b"/><text x="1106.7" y="654.9" font-family="Liberation Sans" font-weight="bold" font-size="12.2" fill="#0c1d30" stroke="#0c1d30" stroke-width="0.45" textLength="67.7" lengthAdjust="spacingAndGlyphs">Souped up</text><ellipse cx="1089" cy="663" rx="4.2" ry="3.6" fill="#f05a28"/><path d="M1092 662h7" stroke="#f05a28" stroke-width="1.4"/><rect x="1109.8" y="658" width="150.20000000000005" height="11.700000000000045" fill="#7a982b"/><path d="M1275 654h36q-2 12-18.0 12q-16.0 0-18.0 -12z" fill="#3aa39a"/><ellipse cx="1293.0" cy="654" rx="18.0" ry="3.5" fill="#9fd36b"/><rect x="1135" y="694" width="65" height="6" rx="3" fill="#c9d6dc"/><ellipse cx="1146.0" cy="688" rx="9.5" ry="11" fill="#eef0e4" stroke="#b9c2b0"/><ellipse cx="1167.5" cy="688" rx="9.5" ry="11" fill="#eef0e4" stroke="#b9c2b0"/><ellipse cx="1189.0" cy="688" rx="9.5" ry="11" fill="#eef0e4" stroke="#b9c2b0"/><text x="1242.7" y="686.4" font-family="Liberation Sans" font-weight="bold" font-size="12.2" fill="#0c1d30" stroke="#0c1d30" stroke-width="0.45" textLength="110" lengthAdjust="spacingAndGlyphs">Egg someone on</text><ellipse cx="1214" cy="696" rx="4.2" ry="3.6" fill="#f05a28"/><path d="M1217 695h7" stroke="#f05a28" stroke-width="1.4"/><rect x="1226.3" y="693.3" width="153.70000000000005" height="7.7000000000000455" fill="#7a982b"/></svg></div>
<div class="a" style="left:346.4px;top:708.75px;width:139px;height:79px;background:linear-gradient(180deg,#efc589,#f3d5a5 45%,#f0cd98);box-shadow:0 0 0 1px #e0d6c8"></div>
<div class="a" style="left:354px;top:715.7px;width:124.3px;height:66px;background:#faf8f6;box-shadow:0 0 0 1px #b9b48a"></div>
<div class="a" style="left:347.4px;top:744.9px;width:8px;height:7px;background:#3b2f27;"></div>
<div class="a" style="left:476.4px;top:744.9px;width:8px;height:7px;background:#3b2f27;"></div>
<div class="a" style="left:370px;top:718.5px;width:95px;height:1.5px;background:#333;opacity:.6"></div>
<div class="a" style="left:358px;top:721.5px;width:51px;height:3px;background:#2a2a2a;opacity:.9"></div>
<div class="a" style="left:426px;top:721.5px;width:47px;height:3px;background:#2a2a2a;opacity:.9"></div>
<div class="a" style="left:409px;top:721px;width:17px;height:4px;background:#f4f4f4;"></div>
<div class="a" style="left:372px;top:728px;width:95px;height:1.2px;background:#9a9aa0;opacity:.5"></div>
<div class="a" style="left:375px;top:731px;width:80px;height:44px;background:#f7efcf;"></div>
<div class="a" style="left:383px;top:740px;width:10px;height:4px;background:#e8c84a;opacity:.85"></div>
<div class="a" style="left:392px;top:748px;width:10px;height:5px;background:#8a3a2a;opacity:.85"></div>
<div class="a" style="left:406px;top:742px;width:10px;height:6px;background:#6a5a4a;opacity:.85"></div>
<div class="a" style="left:431px;top:742px;width:9px;height:5px;background:#8a5a2a;opacity:.85"></div>
<div class="a" style="left:386px;top:751px;width:10px;height:6px;background:#6a4a3a;opacity:.85"></div>
<div class="a" style="left:412px;top:752px;width:7px;height:6px;background:#7a3a2a;opacity:.85"></div>
<div class="a" style="left:396px;top:759px;width:10px;height:5px;background:#6a7a4a;opacity:.85"></div>
<div class="a" style="left:420px;top:760px;width:10px;height:5px;background:#3a2a1a;opacity:.85"></div>
<div class="a" style="left:389px;top:766px;width:10px;height:5px;background:#6ab04a;opacity:.85"></div>
<div class="a" style="left:434px;top:767px;width:8px;height:4px;background:#aaa;opacity:.85"></div>
<div class="a" style="left:411px;top:758px;width:8px;height:12px;background:#f2c9a8;opacity:.85"></div>
<div class="a" style="left:358px;top:776.5px;width:115px;height:2px;background:#7a8a9a;opacity:.45"></div>
<div class="a" style="left:346.4px;top:807.4px;width:139px;height:9px;background:#efc589;"></div>
<div class="a" style="left:354px;top:812px;width:124px;height:4px;background:#faf8f6;"></div>
<div class="a" style="left:358px;top:813px;width:116px;height:2px;background:#555;opacity:.8"></div>
<div class="a" style="left:642px;top:307px;width:825px;height:464px;transform:scale(1.0,1.0);transform-origin:0 0;overflow:hidden;background:linear-gradient(180deg,#e8b378 0,#ecc189 9%,#efcd9a 40%,#eac28b 75%,#edca96 100%)"><div class="a" style="left:0;top:0;width:825px;height:464px;background:linear-gradient(90deg,rgba(230,170,100,.25),rgba(255,240,210,.15) 30%,rgba(230,170,100,.2) 60%,rgba(255,230,190,.2) 100%)"></div><div class="a" style="left:33px;top:33px;width:758px;height:397px;background:#fbf9f9;box-shadow:2px 3px 4px rgba(120,80,40,.35)"></div><div class="a" style="left:42px;top:42px;width:742px;height:382px;border:1px solid #9a9a6a"></div><div class="a" style="left:0;top:214px;width:52px;height:39px;background:#3b2f27"></div><div class="a" style="left:773px;top:214px;width:52px;height:39px;background:#3b2f27"></div><div class="t" style="left:336.7px;top:59.2px;font-family:&quot;Liberation Serif&quot;,serif;font-size:32.7px;color:#333">Ход урока:</div><div class="t" style="left:349px;top:98.3px;font-family:&quot;Liberation Serif&quot;,serif;font-size:32.5px;color:#333">Warm-Up</div><svg class="a" style="left:75px;top:133px" width="685" height="265" viewBox="717 440 685 265" preserveAspectRatio="none"><rect x="717" y="440" width="339" height="265" fill="#6bd6ef"/><rect x="1061" y="440" width="341" height="265" fill="#6bd6ef"/><circle cx="905" cy="610" r="75" fill="#8fe0f0" opacity="0.35"/><circle cx="1250" cy="570" r="75" fill="#8fe0f0" opacity="0.35"/><path d="M717 440H1056V470.5Q1045.5 484.75 1035.0 470.5Q1021.75 484.75 1008.5 470.5Q995.25 484.75 982.0 470.5Q968.75 484.75 955.5 470.5Q942.25 484.75 929.0 470.5Q915.75 484.75 902.5 470.5Q889.25 484.75 876.0 470.5Q862.75 484.75 849.5 470.5Q836.25 484.75 823.0 470.5Q809.75 484.75 796.5 470.5Q783.25 484.75 770.0 470.5Q756.75 484.75 743.5 470.5Q730.25 484.75 717 470.5Z" fill="#f2695c"/><path d="M1061 440H1402V470.5Q1396.5 484.75 1391.0 470.5Q1377.75 484.75 1364.5 470.5Q1351.25 484.75 1338.0 470.5Q1324.75 484.75 1311.5 470.5Q1298.25 484.75 1285.0 470.5Q1271.75 484.75 1258.5 470.5Q1245.25 484.75 1232.0 470.5Q1218.75 484.75 1205.5 470.5Q1192.25 484.75 1179.0 470.5Q1165.75 484.75 1152.5 470.5Q1139.25 484.75 1126.0 470.5Q1112.75 484.75 1099.5 470.5Q1086.25 484.75 1073 470.5Q1067.0 484.75 1061 470.5Z" fill="#f2695c"/><text x="773.7" y="462.5" font-family="Liberation Serif" font-weight="bold" font-size="21.5" fill="#fff" stroke="#fff" stroke-width="1.1" textLength="226" lengthAdjust="spacingAndGlyphs">FOOD IDIOMS</text><text x="1111.6" y="464.7" font-family="Liberation Serif" font-weight="bold" font-size="21.5" fill="#fff" stroke="#fff" stroke-width="1.1" textLength="220.5" lengthAdjust="spacingAndGlyphs">FOOD IDIOMS</text><ellipse cx="755.0" cy="456" rx="8" ry="6" fill="#fff"/><circle cx="755.0" cy="464" r="6" fill="#f3c39a"/><path d="M750.0 465h10" stroke="#8b2d1a" stroke-width="2"/><rect x="749.0" y="469" width="12" height="8" rx="2" fill="#fff"/><path d="M774 478h14l2 26h-16z" fill="#f7a21b"/><path d="M762 492l22 -2 5 10-24 4z" fill="#f4d28a"/><path d="M763 498l24 -2 1 5-24 3z" fill="#9ac23c"/><rect x="789" y="484" width="13" height="20" fill="#f0a63a"/><ellipse cx="855.0" cy="485" rx="18.0" ry="7" fill="#f0a44a"/><rect x="837" y="487" width="36" height="4" fill="#8dc63f"/><rect x="838" y="490" width="34" height="5" fill="#6b3a1f"/><rect x="838" y="495" width="34" height="5" rx="2" fill="#f0a44a"/><path d="M912 482h9l-1 16h-7z" fill="#ef4036"/><path d="M917 474v8" stroke="#f7a21b" stroke-width="1.2"/><rect x="914" y="492" width="4" height="4" fill="#fff"/><ellipse cx="978.0" cy="486.5" rx="17.0" ry="13.5" fill="#fff"/><ellipse cx="980.0" cy="484.5" rx="11.0" ry="6.5" fill="#e8442a"/><path d="M967 488.5l14 4" stroke="#6aa84f" stroke-width="4"/><ellipse cx="982.0" cy="492.5" rx="5" ry="3" fill="#e5a23b"/><rect x="923" y="519" width="46" height="16" fill="#f29a9a"/><rect x="923" y="515" width="46" height="7" fill="#fff"/><path d="M923 527h46" stroke="#fff" stroke-width="1.5"/><circle cx="927.0" cy="515" r="3" fill="#d9262c"/><circle cx="936.5" cy="515" r="3" fill="#d9262c"/><circle cx="946.0" cy="515" r="3" fill="#d9262c"/><circle cx="955.5" cy="515" r="3" fill="#d9262c"/><circle cx="965.0" cy="515" r="3" fill="#d9262c"/><path d="M821 557L856 545L862 555V571H821z" fill="#f9c933"/><path d="M821 557L856 545L862 555z" fill="#fde27a"/><circle cx="829" cy="563" r="2" fill="#e59a1f"/><circle cx="841" cy="566" r="2" fill="#e59a1f"/><circle cx="852" cy="561" r="2" fill="#e59a1f"/><circle cx="835" cy="559" r="2" fill="#e59a1f"/><circle cx="929.0" cy="593.0" r="19.0" fill="#8a4a24"/><circle cx="929.0" cy="593.0" r="16.0" fill="#b5632f"/><circle cx="929.0" cy="593.0" r="8.0" fill="#ef4a2a"/><circle cx="808" cy="628" r="7" fill="#e4eab7" stroke="#9bb26a"/><circle cx="816" cy="625" r="7" fill="#e4eab7" stroke="#9bb26a"/><circle cx="815" cy="632" r="7" fill="#e4eab7" stroke="#9bb26a"/><path d="M824 629q16-8 34-10q3 4-2 8q-14 8-30 10z" fill="#4aa43a"/><path d="M906 672l10-8h34l-10 12h-34z" fill="#e8eef2" stroke="#9aa"/><path d="M916 666l6-8h16l-2 12h-20z" fill="#fbe14a"/><path d="M932 662l22-14" stroke="#b9c0c4" stroke-width="3"/><path d="M838 695h35q-3 10-17.5 10q-14.5 0-17.5 -10z" fill="#3d7fc1"/><ellipse cx="855.5" cy="694" rx="17.5" ry="4" fill="#fff"/><path d="M843 693q12.5-14 25 0z" fill="#f7f3e6"/><text x="747.4" y="525.2" font-family="Liberation Sans" font-weight="bold" font-size="12.2" fill="#0c1d30" stroke="#0c1d30" stroke-width="0.45" textLength="119.6" lengthAdjust="spacingAndGlyphs">Sell like hot cakes</text><ellipse cx="737" cy="535" rx="4.2" ry="3.6" fill="#f05a28"/><path d="M740 534h7" stroke="#f05a28" stroke-width="1.4"/><rect x="752" y="532" width="121" height="9" fill="#7a982b"/><text x="887.5" y="556.3" font-family="Liberation Sans" font-weight="bold" font-size="12.2" fill="#0c1d30" stroke="#0c1d30" stroke-width="0.45" textLength="69.5" lengthAdjust="spacingAndGlyphs">Big cheese</text><ellipse cx="874" cy="566" rx="4.2" ry="3.6" fill="#f05a28"/><path d="M877 565h7" stroke="#f05a28" stroke-width="1.4"/><rect x="891" y="561" width="145" height="11" fill="#7a982b"/><text x="751" y="592.5" font-family="Liberation Sans" font-weight="bold" font-size="12.2" fill="#0c1d30" stroke="#0c1d30" stroke-width="0.45" textLength="114" lengthAdjust="spacingAndGlyphs">One smart cookie</text><ellipse cx="738" cy="602" rx="4.2" ry="3.6" fill="#f05a28"/><path d="M741 601h7" stroke="#f05a28" stroke-width="1.4"/><rect x="756" y="598" width="128" height="9" fill="#7a982b"/><text x="893.7" y="632.5" font-family="Liberation Sans" font-weight="bold" font-size="12.2" fill="#0c1d30" stroke="#0c1d30" stroke-width="0.45" textLength="126.8" lengthAdjust="spacingAndGlyphs">Cool as a cucumber</text><ellipse cx="897" cy="641" rx="4.2" ry="3.6" fill="#f05a28"/><path d="M900 640h7" stroke="#f05a28" stroke-width="1.4"/><rect x="912" y="635" width="68" height="11" fill="#7a982b"/><text x="755" y="667" font-family="Liberation Sans" font-weight="bold" font-size="12.2" fill="#0c1d30" stroke="#0c1d30" stroke-width="0.45" textLength="122.5" lengthAdjust="spacingAndGlyphs">Butter someone up</text><ellipse cx="743" cy="675" rx="4.2" ry="3.6" fill="#f05a28"/><path d="M746 674h7" stroke="#f05a28" stroke-width="1.4"/><rect x="764" y="670" width="128" height="12" fill="#7a982b"/><text x="886" y="700" font-family="Liberation Sans" font-weight="bold" font-size="12.2" fill="#0c1d30" stroke="#0c1d30" stroke-width="0.45" textLength="117" lengthAdjust="spacingAndGlyphs">Cream of the crop</text><path d="M1167 480L1201 468L1207 478V490H1167z" fill="#f9c933"/><path d="M1167 480L1201 468L1207 478z" fill="#fde27a"/><circle cx="1175" cy="486" r="2" fill="#e59a1f"/><circle cx="1187" cy="489" r="2" fill="#e59a1f"/><circle cx="1198" cy="484" r="2" fill="#e59a1f"/><circle cx="1181" cy="482" r="2" fill="#e59a1f"/><ellipse cx="1220" cy="486" rx="4.2" ry="3.6" fill="#f05a28"/><path d="M1223 485h7" stroke="#f05a28" stroke-width="1.4"/><text x="1235" y="489" font-family="Liberation Serif" font-weight="bold" font-size="9" fill="#2a4a5a" textLength="143" lengthAdjust="spacingAndGlyphs">Very important person (VIP)</text><text x="1097.3" y="512" font-family="Liberation Sans" font-weight="bold" font-size="12.2" fill="#0c1d30" stroke="#0c1d30" stroke-width="0.45" textLength="114" lengthAdjust="spacingAndGlyphs">One smart cookie</text><ellipse cx="1084" cy="521" rx="4.2" ry="3.6" fill="#f05a28"/><path d="M1087 520h7" stroke="#f05a28" stroke-width="1.4"/><rect x="1100" y="517" width="127" height="10" fill="#7a982b"/><circle cx="1275.0" cy="513.0" r="19.0" fill="#8a4a24"/><circle cx="1275.0" cy="513.0" r="16.0" fill="#b5632f"/><circle cx="1275.0" cy="513.0" r="8.0" fill="#ef4a2a"/><circle cx="1153" cy="548" r="7" fill="#e4eab7" stroke="#9bb26a"/><circle cx="1161" cy="545" r="7" fill="#e4eab7" stroke="#9bb26a"/><circle cx="1160" cy="552" r="7" fill="#e4eab7" stroke="#9bb26a"/><path d="M1169 549q16-8 34-10q3 4-2 8q-14 8-30 10z" fill="#4aa43a"/><text x="1239" y="551" font-family="Liberation Sans" font-weight="bold" font-size="12.2" fill="#0c1d30" stroke="#0c1d30" stroke-width="0.45" textLength="127.5" lengthAdjust="spacingAndGlyphs">Cool as a cucumber</text><ellipse cx="1242" cy="561" rx="4.2" ry="3.6" fill="#f05a28"/><path d="M1245 560h7" stroke="#f05a28" stroke-width="1.4"/><rect x="1259.4" y="556.4" width="68.29999999999995" height="10.399999999999977" fill="#7a982b"/><text x="1100.4" y="586.6" font-family="Liberation Sans" font-weight="bold" font-size="12.2" fill="#0c1d30" stroke="#0c1d30" stroke-width="0.45" textLength="123.4" lengthAdjust="spacingAndGlyphs">Butter someone up</text><ellipse cx="1089" cy="594" rx="4.2" ry="3.6" fill="#f05a28"/><path d="M1092 593h7" stroke="#f05a28" stroke-width="1.4"/><rect x="1109.8" y="589.4" width="126.0" height="8.800000000000068" fill="#7a982b"/><path d="M1255 591l10-8h34l-10 12h-34z" fill="#e8eef2" stroke="#9aa"/><path d="M1265 585l6-8h16l-2 12h-20z" fill="#fbe14a"/><path d="M1281 581l22-14" stroke="#b9c0c4" stroke-width="3"/><path d="M1184 623h34q-3 10-17.0 10q-14.0 0-17.0 -10z" fill="#3d7fc1"/><ellipse cx="1201.0" cy="622" rx="17.0" ry="4" fill="#fff"/><path d="M1189 621q12.0-14 24 0z" fill="#f7f3e6"/><text x="1232" y="619.3" font-family="Liberation Sans" font-weight="bold" font-size="12.2" fill="#0c1d30" stroke="#0c1d30" stroke-width="0.45" textLength="117" lengthAdjust="spacingAndGlyphs">Cream of the crop</text><ellipse cx="1233" cy="628" rx="4.2" ry="3.6" fill="#f05a28"/><path d="M1236 627h7" stroke="#f05a28" stroke-width="1.4"/><rect x="1251.5" y="624.4" width="46.299999999999955" height="11.0" fill="#7a982b"/><text x="1106.7" y="654.9" font-family="Liberation Sans" font-weight="bold" font-size="12.2" fill="#0c1d30" stroke="#0c1d30" stroke-width="0.45" textLength="67.7" lengthAdjust="spacingAndGlyphs">Souped up</text><ellipse cx="1089" cy="663" rx="4.2" ry="3.6" fill="#f05a28"/><path d="M1092 662h7" stroke="#f05a28" stroke-width="1.4"/><rect x="1109.8" y="658" width="150.20000000000005" height="11.700000000000045" fill="#7a982b"/><path d="M1275 654h36q-2 12-18.0 12q-16.0 0-18.0 -12z" fill="#3aa39a"/><ellipse cx="1293.0" cy="654" rx="18.0" ry="3.5" fill="#9fd36b"/><rect x="1135" y="694" width="65" height="6" rx="3" fill="#c9d6dc"/><ellipse cx="1146.0" cy="688" rx="9.5" ry="11" fill="#eef0e4" stroke="#b9c2b0"/><ellipse cx="1167.5" cy="688" rx="9.5" ry="11" fill="#eef0e4" stroke="#b9c2b0"/><ellipse cx="1189.0" cy="688" rx="9.5" ry="11" fill="#eef0e4" stroke="#b9c2b0"/><text x="1242.7" y="686.4" font-family="Liberation Sans" font-weight="bold" font-size="12.2" fill="#0c1d30" stroke="#0c1d30" stroke-width="0.45" textLength="110" lengthAdjust="spacingAndGlyphs">Egg someone on</text><ellipse cx="1214" cy="696" rx="4.2" ry="3.6" fill="#f05a28"/><path d="M1217 695h7" stroke="#f05a28" stroke-width="1.4"/><rect x="1226.3" y="693.3" width="153.70000000000005" height="7.7000000000000455" fill="#7a982b"/></svg><svg class="a" style="left:170px;top:59px" width="20" height="28" viewBox="0 0 20 28"><path d="M8 1v14M1 8h14M8 1l-2 2M8 1l2 2M1 8l2-2M1 8l2 2M15 8l-2-2M15 8l-2 2" stroke="#111" stroke-width="1.2" fill="none"/><path d="M8 8v14l3.2-3 2.3 5 2-1-2.3-4.7h4.3z" fill="#fff" stroke="#111" stroke-width="1"/></svg></div>
<div class="a" style="left:1584px;top:297px;width:15px;height:488px;background:#e6e6e6;box-shadow:inset 1px 0 0 #dadada"></div>
<div class="a" style="left:1584.5px;top:299px;width:14px;height:14px;background:#fff;box-shadow:inset 0 0 0 1px #c8c8c8"></div>
<div class="a" style="left:1584.5px;top:371.6px;width:14px;height:27.2px;background:#fff;box-shadow:inset 0 0 0 1px #c8c8c8"></div>
<svg class="a" style="left:1584px;top:299px" width="15" height="14" viewBox="0 0 15 14"><path d="M4 9l3.5-3.5 3.5 3.5z" fill="#666"/></svg>
<div class="a" style="left:523px;top:784.5px;width:1076px;height:1px;background:#cfcfcf;"></div>
<div class="t" style="left:533.75px;top:793.06px;font-size:13.4px;color:#5a5a5a;letter-spacing:0.013px;">Заметки к слайду</div>
<div class="a" style="left:321px;top:816px;width:1278px;height:1px;background:#d0d0d0;"></div>
<div class="a" style="left:321px;top:817px;width:1278px;height:19px;background:#f0f0f0;"></div>
<div class="t" style="left:327.60px;top:820.56px;font-size:10.8px;color:#666;letter-spacing:-0.342px;">Слайд 3 из 14</div>
<svg class="a" style="left:412px;top:819px" width="15" height="12" viewBox="0 0 15 12"><path d="M1 1h5l1.5 1.5v9l-1.5-1.5h-5zM7.5 2.5l1.5-1.5h5v9h-5l-1.5 1.5M10 8l3-5" fill="none" stroke="#777" stroke-width="1"/></svg>
<div class="t" style="left:442.20px;top:820.56px;font-size:10.8px;color:#666;letter-spacing:-0.079px;">русский</div>
<svg class="a" style="left:1097px;top:819px" width="12" height="12" viewBox="0 0 12 12"><path d="M6 1l-3 3h6zM1 6.5h10M1 9h10M1 11.5h10" fill="none" stroke="#777" stroke-width="1"/></svg>
<div class="t" style="left:1114.50px;top:820.56px;font-size:10.8px;color:#555;letter-spacing:-0.044px;">Заметки</div>
<svg class="a" style="left:1175px;top:819px" width="12" height="12" viewBox="0 0 12 12"><path d="M0.5 0.5h11v8h-6l-3 3v-3h-2z" fill="#777"/></svg>
<div class="t" style="left:1190.00px;top:820.56px;font-size:10.8px;color:#555;letter-spacing:0.235px;">Примечания</div>
<div class="a" style="left:1273px;top:817px;width:33.6px;height:19px;background:#dcdcdc;"></div>
<svg class="a" style="left:1270px;top:817px" width="329" height="19" viewBox="1270 817 329 19"><g fill="none" stroke="#777" stroke-width="1">
<rect x="1283.5" y="820.5" width="13" height="11"/><rect x="1286" y="822.5" width="5" height="5"/><path d="M1286 829.5h8"/>
<rect x="1319.5" y="821.5" width="5" height="4"/><rect x="1327.5" y="821.5" width="5" height="4"/><rect x="1319.5" y="828.5" width="5" height="4"/><rect x="1327.5" y="828.5" width="5" height="4"/>
<path d="M1354.5 821.5h6l1 1 1-1h6v10h-6l-1 1-1-1h-6zM1361.5 822v10"/>
<path d="M1389.5 821.5h13v7h-13zM1396 828.5v3M1393 833l3-3 3 3"/>
<path d="M1418 826.5h5M1525.5 826.5h7M1529 823v7M1430 826.5h92"/>
<rect x="1580.5" y="820.5" width="12" height="11"/><path d="M1583 823l3 3M1590 823l-3 3M1583 829l3-3M1590 829l-3-3"/>
</g><rect x="1458" y="821" width="3" height="11" fill="#666"/><path d="M1477 824v5" stroke="#aaa"/></svg>
<div class="t" style="left:1548.00px;top:820.56px;font-size:10.8px;color:#666;letter-spacing:-0.872px;">69%</div>
<div class="a" style="left:321px;top:836px;width:1278px;height:37px;background:#d5e2ee;"></div>
<div class="a" style="left:366.7px;top:836px;width:320.3px;height:37px;background:#fff;"></div>
<svg class="a" style="left:375px;top:845px" width="18" height="18" viewBox="0 0 18 18"><circle cx="11" cy="7" r="5" fill="none" stroke="#333" stroke-width="1.5"/><path d="M7.5 10.5l-5.5 5.5" stroke="#333" stroke-width="1.5"/></svg>
<div class="t" style="left:403.00px;top:849.16px;font-size:13.4px;color:#555;letter-spacing:0.127px;">Введите здесь текст для поиска</div>
<svg class="a" style="left:335px;top:846px" width="16" height="16" viewBox="0 0 16 16"><path d="M1 2.2l6-.9v6H1zM8 1.2l7-1v7.1H8zM1 8.5h6v6l-6-.9zM8 8.5h7v7.3l-7-1z" fill="#1b1b1b"/></svg>
<svg class="a" style="left:700px;top:846px" width="20" height="17" viewBox="0 0 20 17"><path d="M2 2h12M2 15h12M3.5 4.5h9v8h-9zM17 1v3M17 6v5M17 13v3" fill="none" stroke="#222" stroke-width="1.5"/></svg>
<div class="a" style="left:1102px;top:836px;width:45px;height:37px;background:#e8f0f7;"></div>
<svg class="a" style="left:747px;top:845px" width="20" height="20" viewBox="0 0 20 20"><circle cx="10" cy="10" r="9.5" fill="#1a8ad4"/><path d="M4 11q1-7 7-7 6 0 6 6v1.5H7.5q.5 3.5 4.5 3.5 2.5 0 4.5-1.2v3.3q-2 1-5 1-7.5 0-7.5-7z" fill="#3ec270"/><path d="M7.6 9h6q0-3-3-3t-3 3z" fill="#1a8ad4"/></svg>
<svg class="a" style="left:793px;top:845px" width="20" height="20" viewBox="0 0 20 20"><path d="M1 4h7l2 2h9v12H1z" fill="#f8c83c"/><path d="M1 8h18v10H1z" fill="#fadb6a"/><rect x="6" y="12" width="8" height="5" fill="#2a86c8"/></svg>
<svg class="a" style="left:839px;top:845px" width="20" height="20" viewBox="0 0 20 20"><path d="M2 6h16v12H2z" fill="#222"/><path d="M6 6V3.5a4 4 0 0 1 8 0V6" fill="none" stroke="#222" stroke-width="1.5"/><rect x="6.5" y="9" width="3" height="3" fill="#f25022"/><rect x="10.5" y="9" width="3" height="3" fill="#7fba00"/><rect x="6.5" y="13" width="3" height="3" fill="#00a4ef"/><rect x="10.5" y="13" width="3" height="3" fill="#ffb900"/></svg>
<svg class="a" style="left:885px;top:845px" width="20" height="20" viewBox="0 0 20 20"><path d="M1 6l9-5 9 5v12H1z" fill="#0f6cbd"/><path d="M1 6l9 6 9-6v12H1z" fill="#2b88d8"/><path d="M3 6.5h14l-7 4.5z" fill="#fff"/></svg>
<svg class="a" style="left:931px;top:845px" width="20" height="20" viewBox="0 0 20 20"><circle cx="10" cy="10" r="9.5" fill="#e8342a"/><text x="10" y="15.5" text-anchor="middle" font-family="Liberation Sans" font-weight="bold" font-size="14" fill="#fff">Я</text></svg>
<svg class="a" style="left:977px;top:845px" width="20" height="20" viewBox="0 0 20 20"><circle cx="12" cy="6" r="3" fill="#7b83eb"/><rect x="9" y="8" width="10" height="9" rx="3" fill="#7b83eb"/><rect x="1" y="4" width="11" height="11" rx="1.5" fill="#4b53bc"/><text x="6.5" y="13" text-anchor="middle" font-family="Liberation Sans" font-weight="bold" font-size="9" fill="#fff">T</text><circle cx="16" cy="16" r="4" fill="#6bb700" stroke="#fff" stroke-width="1"/></svg>
<svg class="a" style="left:1023px;top:845px" width="20" height="20" viewBox="0 0 20 20"><circle cx="10" cy="10" r="9.5" fill="#f4f4f4"/><path d="M5 3.5l5 8v6M15 3.5l-5 8" fill="none" stroke="#e8342a" stroke-width="2.6"/></svg>
<svg class="a" style="left:1068px;top:845px" width="20" height="20" viewBox="0 0 20 20"><circle cx="14" cy="5" r="3" fill="#7b83eb"/><rect x="10" y="8" width="9" height="9" rx="3" fill="#7b83eb"/><rect x="1" y="4" width="12" height="12" rx="1.5" fill="#4b53bc"/><text x="7" y="13.5" text-anchor="middle" font-family="Liberation Sans" font-weight="bold" font-size="10" fill="#fff">T</text></svg>
<svg class="a" style="left:1114px;top:845px" width="20" height="20" viewBox="0 0 20 20"><rect x="6" y="3" width="13" height="15" rx="1" fill="#fff" stroke="#c43e1c"/><path d="M12 6h5M12 9h5M12 12h5" stroke="#c43e1c" stroke-width="1"/><rect x="1" y="4" width="11" height="13" rx="1" fill="#d35230"/><text x="6.5" y="14.5" text-anchor="middle" font-family="Liberation Sans" font-weight="bold" font-size="10" fill="#fff">P</text></svg>
<div class="a" style="left:984px;top:871px;width:30px;height:2px;background:#5a9ad6;opacity:.6"></div>
<div class="a" style="left:1010px;top:871px;width:44px;height:2px;background:#5a9ad6;opacity:.6"></div>
<div class="a" style="left:1056px;top:871px;width:42px;height:2px;background:#5a9ad6;opacity:.6"></div>
<div class="a" style="left:1102px;top:871px;width:43px;height:2px;background:#5a9ad6;opacity:.6"></div>
<svg class="a" style="left:1320px;top:840px" width="260" height="30" viewBox="1320 840 260 30"><g fill="none" stroke="#222" stroke-width="1.4">
<path d="M1324 858l6-6 6 6"/>
<rect x="1347" y="849" width="9" height="11" rx="1"/><path d="M1345 852v5M1358 852v5M1350 862h3"/>
<path d="M1390 852h3M1391 849v3"/><rect x="1395" y="851" width="13" height="8" fill="#222"/>
<path d="M1416 860a10 10 0 0 1 12-11M1419 860a6 6 0 0 1 8-7" stroke="#888"/>
<path d="M1436 851h3l4-4v14l-4-4h-3zM1446 851q2 3 0 6M1449 849q3 5 0 10"/>
<path d="M1563 849h12v9h-4l-3 3v-3h-5zM1565 852h8M1565 855h6"/>
</g><rect x="1371.5" y="847" width="5" height="10" rx="2.5" fill="#222"/><path d="M1369.5 854a4.5 4.5 0 0 0 9 0M1374 858.5v3M1371 862h6" stroke="#222" stroke-width="1.3" fill="none"/><circle cx="1421" cy="859.5" r="1.5" fill="#222"/></svg>
<div class="t" style="left:1460.90px;top:850.77px;font-size:11.5px;color:#222;letter-spacing:-1.343px;">РУС</div>
<div class="t" style="left:1508.00px;top:840.69px;font-size:11px;color:#222;letter-spacing:-0.352px;">8:56</div>
<div class="t" style="left:1493.00px;top:856.59px;font-size:11px;color:#222;letter-spacing:-0.526px;">09.04.2021</div>
<div class="a" style="left:321px;top:825.4px;width:56.6px;height:35.2px;background:rgba(25,25,25,.62);border-radius:0 0 4px 0"></div>
<div class="t" style="left:27.70px;top:836.26px;font-size:18px;color:#fff;letter-spacing:0.117px;-webkit-text-stroke:0.25px #fff;">"\"\\\"Анастасия Афанасьева (гость)\\\"\""</div>
<div class="a" style="left:1330px;top:672px;width:262px;height:149px;overflow:hidden;background:#2b2722">
<div class="a" style="left:-20px;top:-30px;width:300px;height:70px;border-radius:50%;background:#5a3a20;filter:blur(14px);"></div>
<div class="a" style="left:40px;top:-20px;width:200px;height:45px;border-radius:50%;background:#a8622a;filter:blur(10px);"></div>
<div class="a" style="left:180px;top:-10px;width:80px;height:40px;border-radius:50%;background:#6a4020;filter:blur(10px);"></div>
<div class="a" style="left:5px;top:40px;width:50px;height:70px;border-radius:50%;background:#1f2a3a;filter:blur(10px);"></div>
<div class="a" style="left:40px;top:40px;width:45px;height:60px;border-radius:50%;background:#2f5a8a;filter:blur(9px);"></div>
<div class="a" style="left:30px;top:90px;width:60px;height:40px;border-radius:50%;background:#6a5a30;filter:blur(10px);"></div>
<div class="a" style="left:100px;top:20px;width:40px;height:80px;border-radius:50%;background:#8a6a50;filter:blur(10px);"></div>
<div class="a" style="left:160px;top:30px;width:40px;height:90px;border-radius:50%;background:#6a5040;filter:blur(10px);"></div>
<div class="a" style="left:210px;top:40px;width:50px;height:60px;border-radius:50%;background:#3a4a5a;filter:blur(10px);"></div>
<div class="a" style="left:215px;top:90px;width:50px;height:60px;border-radius:50%;background:#5a6a7a;filter:blur(10px);"></div>
<div class="a" style="left:0px;top:100px;width:80px;height:60px;border-radius:50%;background:#141414;filter:blur(8px);"></div>
<div class="a" style="left:112px;top:28px;width:68px;height:85px;border-radius:50%;background:#4a3426;filter:blur(3px);"></div>
<div class="a" style="left:124px;top:44px;width:42px;height:58px;border-radius:50%;background:#c9aea0;filter:blur(3px);"></div>
<div class="a" style="left:128px;top:58px;width:34px;height:7px;border-radius:50%;background:#7a6a66;filter:blur(1.5px);"></div>
<div class="a" style="left:100px;top:108px;width:105px;height:60px;border-radius:50%;background:#9aa4c0;filter:blur(5px);"></div>
<div class="a" style="left:118px;top:100px;width:60px;height:30px;border-radius:50%;background:#d8c8c0;filter:blur(4px);"></div>
<div class="a" style="left:0;top:0;width:262px;height:34px;background:linear-gradient(180deg,rgba(0,0,0,.55),rgba(0,0,0,0))"></div>
</div>
<div class="a" style="left:1350.1px;top:681px;width:14.8px;height:14.8px;border-radius:50%;background:#fff"></div>
<div class="a" style="left:1352.5px;top:683.4px;width:10px;height:10px;border-radius:50%;background:#e8202a"></div>
<div class="t" style="left:1371.90px;top:682.52px;font-size:12.5px;color:#fff;font-weight:bold;letter-spacing:-0.143px;opacity:.92;">На собрании</div>
<div class="t" style="left:1464.40px;top:683.37px;font-size:11.5px;color:#eee;letter-spacing:-0.916px;">39:39</div>
<div class="a" style="left:1568px;top:691px;width:8px;height:1.4px;background:#ddd;"></div>
<div class="a" style="left:1394px;top:778.3px;width:101px;height:33.4px;background:rgba(62,62,62,.93);"></div>
<div class="a" style="left:1494.8px;top:778.3px;width:34.1px;height:33.4px;background:#b52e3e;"></div>
<svg class="a" style="left:1394px;top:778px" width="135" height="34" viewBox="1394 778 135 34">
<rect x="1403.5" y="790.5" width="10" height="10" rx="1.5" fill="#fff"/><path d="M1414.5 793.5l3.5-2v8.5l-3.5-2z" fill="#fff"/>
<rect x="1442" y="788" width="5" height="9" rx="2.5" fill="#fff"/><path d="M1440 794a4.5 4.5 0 0 0 9 0M1444.5 798.5v3" stroke="#fff" stroke-width="1.2" fill="none"/>
<rect x="1471.1" y="790.2" width="14.5" height="10.4" rx="1" fill="none" stroke="#ddd" stroke-width="1.2"/><path d="M1475.5 792.5l5.5 5.5M1481 792.5l-5.5 5.5" stroke="#ddd" stroke-width="1.1"/>
<path d="M1504 795.5c3-3 13-3 16 0c.6.6.6 2 0 2.5l-.8.8c-.4.4-1 .3-1.3-.1l-1.3-1.6c-.3-.3-.3-.8-.2-1.1c-2.8-1-6.8-1-9.6 0c.1.3.1.8-.2 1.1l-1.3 1.6c-.3.4-.9.5-1.3.1l-.8-.8c-.6-.5-.6-1.9 0-2.5z" fill="#fff"/>
</svg>
<div class="a" style="left:1388px;top:150px;width:369px;height:77px;border-radius:4px;background:#464646"></div>
<div class="t" style="left:1406px;top:165px;font-size:20.5px;color:#fff;letter-spacing:0.35px;-webkit-text-stroke:0.2px #fff">Отключить микрофон</div>
<div class="t" style="left:1406px;top:195px;font-size:20px;color:#fff;letter-spacing:-0.2px;-webkit-text-stroke:0.2px #fff">(CTRL+SHIFT+M)</div>
<div class="a" style="left:2px;top:874px;width:1912px;height:144px;background:#1c1c1c;"></div>
<div class="a" style="left:96.25px;top:916.75px;width:62.5px;height:62.5px;border-radius:50%;background:#6264a7"></div>
<div class="t" style="left:112.00px;top:939.22px;font-size:21px;color:#fff;font-weight:bold;letter-spacing:-1.041px;">+12</div>
<div class="a" style="left:220.65px;top:914.90px;width:66.20px;height:66.20px;border-radius:50%;background:#9d9d9d"></div>
<svg class="a" style="left:233.75px;top:928.00px" width="40" height="40" viewBox="-20 -20 40 40"><g fill="none" stroke="#fff" stroke-width="2.1"><circle cx="0" cy="-6.75" r="6.1"/><path d="M-13.6 5.6h27.2q0 7.6-13.6 7.6t-13.6-7.6z" stroke-linejoin="round"/></g></svg>
<div class="a" style="left:347px;top:915px;width:66px;height:66px;border-radius:50%;background:#e2def0"></div>
<div class="t" style="left:365.00px;top:936.68px;font-size:24px;color:#464775;letter-spacing:-0.759px;-webkit-text-stroke:0.5px #464775;">KB</div>
<div class="a" style="left:473.15px;top:914.90px;width:66.20px;height:66.20px;border-radius:50%;background:#9d9d9d"></div>
<svg class="a" style="left:486.25px;top:928.00px" width="40" height="40" viewBox="-20 -20 40 40"><g fill="none" stroke="#fff" stroke-width="2.1"><circle cx="0" cy="-6.75" r="6.1"/><path d="M-13.6 5.6h27.2q0 7.6-13.6 7.6t-13.6-7.6z" stroke-linejoin="round"/></g></svg>
<div class="a" style="left:569px;top:878px;width:271px;height:140px;background:#3d3d3d;"></div>
<div class="a" style="left:840px;top:878px;width:269px;height:140px;background:#393939;"></div>
<div class="a" style="left:1109px;top:878px;width:270px;height:140px;background:#3b3b3b;"></div>
<div class="a" style="left:671.30px;top:915.10px;width:66.20px;height:66.20px;border-radius:50%;background:#9d9d9d"></div>
<svg class="a" style="left:684.40px;top:928.20px" width="40" height="40" viewBox="-20 -20 40 40"><g fill="none" stroke="#fff" stroke-width="2.1"><circle cx="0" cy="-6.75" r="6.1"/><path d="M-13.6 5.6h27.2q0 7.6-13.6 7.6t-13.6-7.6z" stroke-linejoin="round"/></g></svg>
<div class="a" style="left:941.30px;top:915.10px;width:66.20px;height:66.20px;border-radius:50%;background:#9d9d9d"></div>
<svg class="a" style="left:954.40px;top:928.20px" width="40" height="40" viewBox="-20 -20 40 40"><g fill="none" stroke="#fff" stroke-width="2.1"><circle cx="0" cy="-6.75" r="6.1"/><path d="M-13.6 5.6h27.2q0 7.6-13.6 7.6t-13.6-7.6z" stroke-linejoin="round"/></g></svg>
<div class="a" style="left:1210.40px;top:915.10px;width:66.20px;height:66.20px;border-radius:50%;background:#9d9d9d"></div>
<svg class="a" style="left:1223.50px;top:928.20px" width="40" height="40" viewBox="-20 -20 40 40"><g fill="none" stroke="#fff" stroke-width="2.1"><circle cx="0" cy="-6.75" r="6.1"/><path d="M-13.6 5.6h27.2q0 7.6-13.6 7.6t-13.6-7.6z" stroke-linejoin="round"/></g></svg>
<div class="t" style="left:592.00px;top:991.42px;font-size:19px;color:#fff;letter-spacing:-0.118px;">"\"\\\"любовь короле...</div>
<svg class="a" style="left:798px;top:990px" width="20" height="22" viewBox="0 0 20 22"><rect x="5.3" y="2" width="8.3" height="11.5" rx="4.15" fill="#fff"/><path d="M2.8 10.2a6.65 6.65 0 0 0 13.3 0M9.45 17v3.8" fill="none" stroke="#fff" stroke-width="1.5"/><path d="M1.2 0.6L18.6 18.6" stroke="#3d3d3d" stroke-width="1.4"/><path d="M0.2 2L17.6 20" stroke="#fff" stroke-width="1.6"/></svg>
<div class="t" style="left:861.20px;top:991.42px;font-size:19px;color:#fff;letter-spacing:-0.463px;">"\"Светлана (гость)\""</div>
<svg class="a" style="left:1051px;top:990px" width="20" height="22" viewBox="0 0 20 22"><rect x="5.3" y="2" width="8.3" height="11.5" rx="4.15" fill="#fff"/><path d="M2.8 10.2a6.65 6.65 0 0 0 13.3 0M9.45 17v3.8" fill="none" stroke="#fff" stroke-width="1.5"/><path d="M1.2 0.6L18.6 18.6" stroke="#393939" stroke-width="1.4"/><path d="M0.2 2L17.6 20" stroke="#fff" stroke-width="1.6"/></svg>
<div class="t" style="left:1131.00px;top:991.42px;font-size:19px;color:#fff;letter-spacing:-0.698px;">"Dina Khus (гость)"</div>
<svg class="a" style="left:1299px;top:990px" width="20" height="22" viewBox="0 0 20 22"><rect x="5.3" y="2" width="8.3" height="11.5" rx="4.15" fill="#fff"/><path d="M2.8 10.2a6.65 6.65 0 0 0 13.3 0M9.45 17v3.8" fill="none" stroke="#fff" stroke-width="1.5"/><path d="M1.2 0.6L18.6 18.6" stroke="#3b3b3b" stroke-width="1.4"/><path d="M0.2 2L17.6 20" stroke="#fff" stroke-width="1.6"/></svg>
<div class="a" style="left:1379px;top:878px;width:270px;height:140px;overflow:hidden;background:#c6c6c8">
<div class="a" style="left:2px;top:16px;width:82px;height:86px;border-radius:3px;background:#a4a4a4;filter:blur(2.5px);"></div>
<div class="a" style="left:209px;top:18px;width:70px;height:84px;border-radius:3px;background:#a6a6a6;filter:blur(2.5px);"></div>
<div class="a" style="left:-10px;top:-10px;width:290px;height:22px;border-radius:0;background:#d2d2d4;filter:blur(5px);"></div>
<div class="a" style="left:84px;top:20px;width:30px;height:90px;border-radius:0;background:#d0d0d0;filter:blur(5px);"></div>
<div class="a" style="left:88px;top:-25px;width:130px;height:115px;border-radius:50%;background:#3e2e26;filter:blur(4px);"></div>
<div class="a" style="left:104px;top:-10px;width:98px;height:126px;border-radius:50%;background:#c7a392;filter:blur(3px);"></div>
<div class="a" style="left:118px;top:10px;width:70px;height:40px;border-radius:50%;background:#d0ae9e;filter:blur(6px);"></div>
<div class="a" style="left:122px;top:33px;width:26px;height:6px;border-radius:50%;background:#6a4a3e;filter:blur(2px);"></div>
<div class="a" style="left:160px;top:31px;width:26px;height:6px;border-radius:50%;background:#6a4a3e;filter:blur(2px);"></div>
<div class="a" style="left:124px;top:44px;width:20px;height:7px;border-radius:50%;background:#5a3a30;filter:blur(2px);"></div>
<div class="a" style="left:163px;top:42px;width:20px;height:7px;border-radius:50%;background:#5a3a30;filter:blur(2px);"></div>
<div class="a" style="left:140px;top:95px;width:28px;height:8px;border-radius:50%;background:#9a6a5a;filter:blur(2px);"></div>
<div class="a" style="left:118px;top:100px;width:70px;height:50px;border-radius:50%;background:#c09a88;filter:blur(4px);"></div>
<div class="a" style="left:30px;top:108px;width:90px;height:60px;border-radius:50%;background:#242022;filter:blur(4px);"></div>
<div class="a" style="left:180px;top:100px;width:110px;height:60px;border-radius:50%;background:#242022;filter:blur(4px);"></div>
</div>
<div class="t" style="left:1401.50px;top:989.92px;font-size:19px;color:#fff;letter-spacing:-0.574px;">"\"\\\"Анастасия Афанась...</div>
<div class="a" style="left:1649px;top:878px;width:266px;height:140px;overflow:hidden;background:#1c1714">
<div class="a" style="left:-20px;top:-25px;width:240px;height:55px;border-radius:50%;background:#a85a1c;filter:blur(9px);"></div>
<div class="a" style="left:20px;top:-15px;width:140px;height:35px;border-radius:50%;background:#c27020;filter:blur(8px);"></div>
<div class="a" style="left:-10px;top:35px;width:70px;height:40px;border-radius:50%;background:#2a2a30;filter:blur(8px);"></div>
<div class="a" style="left:0px;top:60px;width:60px;height:30px;border-radius:50%;background:#4a6070;filter:blur(7px);"></div>
<div class="a" style="left:45px;top:50px;width:40px;height:30px;border-radius:50%;background:#7a5a30;filter:blur(7px);"></div>
<div class="a" style="left:140px;top:20px;width:50px;height:70px;border-radius:50%;background:#7a7a7a;filter:blur(7px);"></div>
<div class="a" style="left:195px;top:35px;width:45px;height:45px;border-radius:50%;background:#3a6aa8;filter:blur(7px);"></div>
<div class="a" style="left:205px;top:68px;width:30px;height:18px;border-radius:50%;background:#c09030;filter:blur(5px);"></div>
<div class="a" style="left:185px;top:85px;width:80px;height:35px;border-radius:50%;background:#56625e;filter:blur(8px);"></div>
<div class="a" style="left:60px;top:75px;width:140px;height:35px;border-radius:50%;background:#7a4a1c;filter:blur(8px);"></div>
<div class="a" style="left:0px;top:90px;width:50px;height:50px;border-radius:50%;background:#3a4a50;filter:blur(8px);"></div>
<div class="a" style="left:88px;top:14px;width:70px;height:85px;border-radius:50%;background:#6a5040;filter:blur(4px);"></div>
<div class="a" style="left:100px;top:32px;width:48px;height:66px;border-radius:50%;background:#d4bab0;filter:blur(3px);"></div>
<div class="a" style="left:108px;top:55px;width:34px;height:6px;border-radius:50%;background:#8a8080;filter:blur(1.5px);"></div>
<div class="a" style="left:110px;top:85px;width:40px;height:40px;border-radius:50%;background:#dcc8c0;filter:blur(4px);"></div>
<div class="a" style="left:48px;top:105px;width:165px;height:70px;border-radius:50%;background:#7c84a8;filter:blur(4px);"></div>
<div class="a" style="left:102px;top:102px;width:56px;height:28px;border-radius:50%;background:#dccbc4;filter:blur(4px);"></div>
</div>
<div class="a" style="left:0px;top:1018px;width:1920px;height:2px;background:#000;"></div>
<div class="a" style="left:0;top:1020px;width:1920px;height:60px;background:linear-gradient(90deg,#3d1c39 0,#3d1c39 72px,#464646 588px,#474545 1290px,#3e1f3a 1430px,#3e1f3a 100%)"></div>
<div class="a" style="left:0px;top:1020px;width:72px;height:60px;background:#3d1c39;"></div>
<div class="a" style="left:72px;top:1020px;width:516px;height:60px;background:#f2f2f2;border:1px solid #c6c6c6;border-right-width:2px"></div>
<svg class="a" style="left:24px;top:1037px" width="25" height="25" viewBox="0 0 25 25"><path d="M0 3.2l10.1-1.4v9.8H0zM11.3 1.6L24 0v11.6H11.3zM0 12.8h10.1v9.8L0 21.2zM11.3 12.8H24V24l-12.7-1.7z" fill="#fff"/></svg>
<svg class="a" style="left:88px;top:1036px" width="28" height="28" viewBox="0 0 28 28"><circle cx="17.5" cy="10" r="7.8" fill="none" stroke="#111" stroke-width="1.8"/><path d="M12 15.5L2 25.5" stroke="#111" stroke-width="1.9"/></svg>
<div class="t" style="left:133.00px;top:1040.95px;font-size:22.5px;color:#1a1a1a;letter-spacing:-0.282px;">Введите здесь текст для поиска</div>
<svg class="a" style="left:611px;top:1036px" width="26" height="26" viewBox="0 0 26 26"><g fill="none" stroke="#fff" stroke-width="1.3"><path d="M0.5 2v2h14V2M0.5 24v-2h14v2M2 7h11v12H2zM23 0.5v6M23 10v4M23 18v7"/></g><rect x="21.5" y="7" width="3" height="3" fill="#fff"/></svg>
<div class="a" style="left:1115px;top:1020px;width:66px;height:60px;background:#6b6b6b;"></div>
<div class="a" style="left:1181px;top:1020px;width:3px;height:60px;background:#3a3a3a;"></div>
<svg class="a" style="left:0;top:0" width="1920" height="1080" viewBox="0 0 1920 1080" style="pointer-events:none"><g transform="translate(686,1034)"><path d="M2 16C2 6 9 0 17 0c8 0 13.5 6 13.5 13v3.5H9c.5 6 5 8.5 10 8.5 4 0 7.5-1.2 10-3v6.5c-3 1.8-7 2.5-11 2.5C7 31 2 25 2 16z" fill="#1f86dc"/><path d="M9.2 11.8h13.5c0-4-2.5-6.8-6.8-6.8-4 0-6.5 2.8-6.7 6.8z" fill="#464646"/><path d="M0 12c2-6 7-8.5 10-8.5-3 2-5 5-5 9" fill="#1f86dc"/></g><g transform="translate(759,1036)"><path d="M0 2h12l3 3h19v22H0z" fill="#e9b020"/><path d="M0 8h34v19H0z" fill="#fbd66a"/><path d="M6 27v-10h22v10h-5v-5h-12v5z" fill="#3a8ed6"/></g><g transform="translate(832,1032)"><path d="M0.5 9h36v24.5h-36z" fill="#fff"/><path d="M11 9V6a7.5 7.5 0 0 1 15 0v3" fill="none" stroke="#fff" stroke-width="2.2"/><rect x="11.5" y="14" width="6.5" height="6.5" fill="#f35325"/><rect x="19.5" y="14" width="6.5" height="6.5" fill="#81bc06"/><rect x="11.5" y="22" width="6.5" height="6.5" fill="#05a6f0"/><rect x="19.5" y="22" width="6.5" height="6.5" fill="#ffba08"/></g><g transform="translate(909,1033)"><rect x="0" y="0" width="33" height="32" rx="3" fill="#b30b00"/><path d="M8 23c3-6 8-14 8-17.5 0-2-2-2-2 0 0 4 5 11 11 13 2 .5 2-1.5 0-1.5-6 0-13 3-16 6.5-1 1 0 2 1 0z" fill="none" stroke="#fff" stroke-width="1.8"/></g><g transform="translate(1000.4,1049.25)"><circle r="16.7" fill="#dd4b3e"/><path d="M0 0L-14.5 -8.3A16.7 16.7 0 0 0 -8.3 14.5z" fill="#1ea362"/><path d="M0 0L-8.3 14.5A16.7 16.7 0 0 0 16.7 0 L14.4 -8.4z" fill="#ffcd40"/><path d="M0 -8.35H14.5A16.7 16.7 0 0 1 16.7 0z" fill="#ffcd40"/><circle r="7.6" fill="#fff"/><circle r="6.1" fill="#4a8af4"/></g><g transform="translate(1058,1032.6)"><path d="M0 12L18 0 36 12v21H0z" fill="#0a64ad"/><path d="M3 8h30v14H3z" fill="#fff"/><path d="M0 12l18 12 18-12v21H0z" fill="#1e9de8"/><path d="M0 33l14-10h8l14 10z" fill="#43b3f0"/></g><circle cx="1094.6" cy="1061.75" r="12" fill="#2a2a2a" stroke="#bbb" stroke-width="1.2"/><text x="1094.6" y="1069" text-anchor="middle" font-family="Liberation Sans" font-weight="bold" font-size="20" fill="#fff">6</text><g transform="translate(1132.7,1033.6)"><circle cx="25" cy="6.5" r="5.5" fill="#5059c9"/><circle cx="15" cy="5" r="5" fill="#7b83eb"/><rect x="18" y="13" width="16" height="15" rx="4" fill="#5059c9"/><path d="M6 12h20v14a10 10 0 0 1-20 0z" fill="#7b83eb"/><rect x="0" y="8" width="18" height="18" rx="2" fill="#4b53bc"/><text x="9" y="22.5" text-anchor="middle" font-family="Liberation Sans" font-weight="bold" font-size="15" fill="#fff">T</text></g><circle cx="1162.5" cy="1061.3" r="7.3" fill="#c50f1f" stroke="#fff" stroke-width="1.6"/><g transform="translate(1207.7,1033.6)"><rect x="8" y="0" width="27" height="32.4" rx="2" fill="#41a5ee"/><rect x="8" y="8" width="27" height="8" fill="#2b7cd3"/><rect x="8" y="16" width="27" height="8" fill="#185abd"/><path d="M8 24h27v6.4a2 2 0 0 1-2 2H10a2 2 0 0 1-2-2z" fill="#103f91"/><rect x="0" y="8" width="18" height="17" rx="2" fill="#185abd"/><text x="9" y="22" text-anchor="middle" font-family="Liberation Sans" font-weight="bold" font-size="14" fill="#fff">W</text></g><g transform="translate(1284.8,1033.6)"><rect x="0" y="0" width="32.2" height="32.4" rx="2" fill="#4cb8f0"/><path d="M0 32.4V20L11 9l10 10 4-3 7.2 6.5v9.9z" fill="#1d4f91"/><path d="M11 9l10 10-6 13.4H0V20z" fill="#225aa8"/><circle cx="23.5" cy="8" r="3.5" fill="#fff"/></g></svg>
<div class="a" style="left:746px;top:1077.5px;width:61px;height:2.5px;background:#8ab2e6;"></div>
<div class="a" style="left:896px;top:1077.5px;width:61px;height:2.5px;background:#8ab2e6;"></div>
<div class="a" style="left:971px;top:1077.5px;width:61px;height:2.5px;background:#8ab2e6;"></div>
<div class="a" style="left:1115px;top:1077.5px;width:66px;height:2.5px;background:#8ab2e6;"></div>
<div class="a" style="left:1196px;top:1077.5px;width:61px;height:2.5px;background:#8ab2e6;"></div>
<div class="a" style="left:1271px;top:1077.5px;width:61px;height:2.5px;background:#8ab2e6;"></div>
<svg class="a" style="left:0;top:0" width="1920" height="1080" viewBox="0 0 1920 1080"><g fill="none" stroke="#fff" stroke-width="1.4">
<path d="M1507 1053.5l9.3-9.3 9.3 9.3"/>
<path d="M1541 1045.5h4.5l6-5v18.5l-6-5h-4.5z"/><path d="M1555 1046q2.5 3.5 0 7M1558.5 1043.5q4.5 6 0 12M1562 1041q6 8.5 0 17"/>
<rect x="1577.5" y="1045" width="20" height="11"/><path d="M1599 1048.5v4"/>
<path d="M1616 1060a18 18 0 0 1 18-18M1620 1060a14 14 0 0 1 14-14M1624 1060a10 10 0 0 1 10-10" stroke-width="1.1"/>
<path d="M1858 1038.5h23.5v16h-14l-4.5 4.5v-4.5h-5z" fill="#fff"/><path d="M1862 1043h15M1862 1046.5h15M1862 1050h10" stroke="#555" stroke-width="1.2"/>
</g>
<rect x="1579" y="1046.5" width="15" height="8" fill="#fff"/>
<circle cx="1632.5" cy="1058.5" r="1.7" fill="#fff"/>
<path d="M1654 1039.5l-6 4 6 4 6-4zM1666 1039.5l-6 4 6 4 6-4zM1648 1051.5l6-4 6 4-6 4zM1672 1051.5l-6-4-6 4 6 4zM1654 1056l6-4 6 4-6 4z" fill="#fff"/>
<circle cx="1880.8" cy="1061.7" r="13.2" fill="#2b2b2b" stroke="#999" stroke-width="1.3"/>
<text x="1880.8" y="1068.8" text-anchor="middle" font-family="Liberation Sans" font-weight="bold" font-size="19" fill="#fff" textLength="20" lengthAdjust="spacingAndGlyphs">15</text>
</svg>
<div class="t" style="left:1689.30px;top:1040.84px;font-size:18.5px;color:#fff;letter-spacing:-2.249px;">РУС</div>
<div class="t" style="left:1768.80px;top:1026.94px;font-size:18.5px;color:#fff;letter-spacing:-0.602px;">8:56</div>
<div class="t" style="left:1742.60px;top:1054.94px;font-size:18.5px;color:#fff;letter-spacing:-0.659px;">09.04.2021</div>
<div class="a" style="left:1912px;top:1020px;width:1.5px;height:60px;background:#8a7a88;"></div>
</body></html>
